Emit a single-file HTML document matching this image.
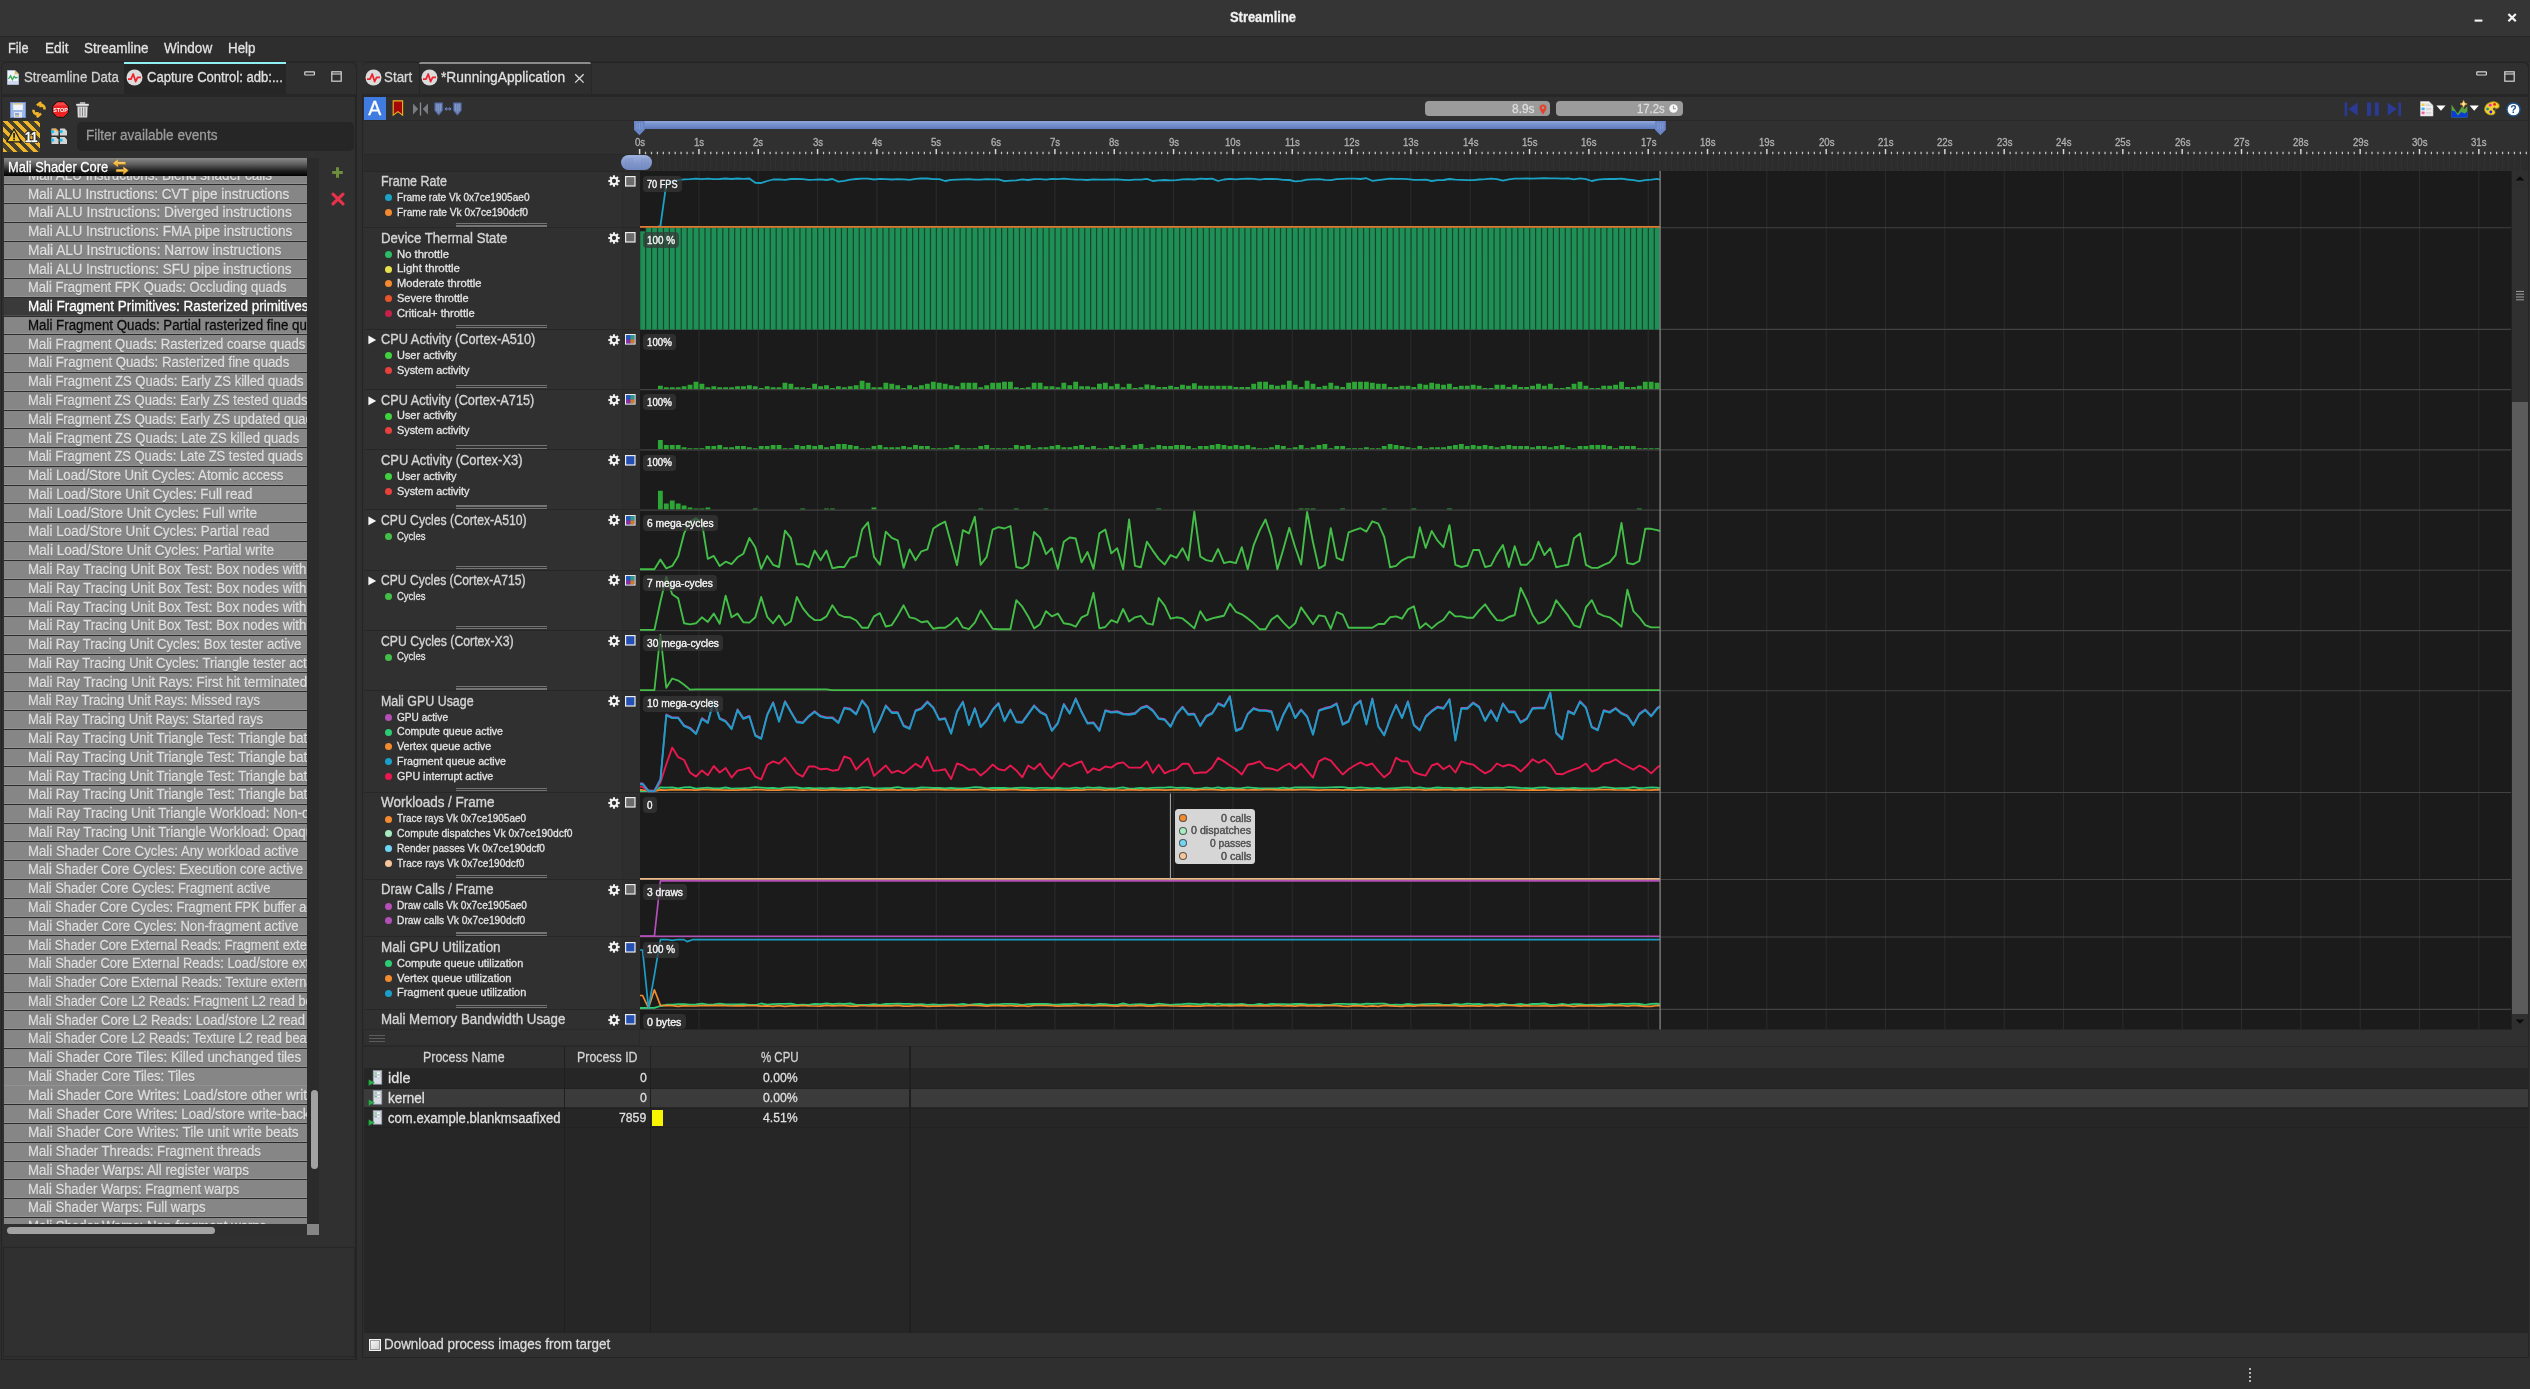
<!DOCTYPE html>
<html><head><meta charset="utf-8"><title>Streamline</title>
<style>
html,body{margin:0;padding:0;background:#2f2f2f;}
body{width:2530px;height:1389px;position:relative;overflow:hidden;font-family:"Liberation Sans",sans-serif;}
.t{position:absolute;white-space:nowrap;line-height:1em;transform-origin:0 50%;display:block;-webkit-text-stroke:0.28px;}
.b{position:absolute;}
svg{position:absolute;overflow:visible;}
#root{position:absolute;left:0;top:0;width:2530px;height:1389px;will-change:transform;}
</style></head>
<body>
<div id="root">
<div class="b" style="left:0.00px;top:0.00px;width:2530.00px;height:36.00px;background:#353535;"></div>
<div class="b" style="left:0.00px;top:36.00px;width:2530.00px;height:1.00px;background:#272727;"></div>
<span class="t" style="left:1230.00px;top:10.27px;font-size:14.67px;color:#f2f2f2;transform:scaleX(0.8798);font-weight:bold;">Streamline</span>
<svg style="left:2470px;top:10px" width="50" height="16" viewBox="0 0 50 16"><path d="M4.6 10.6 H12.4" stroke="#f4f4f4" stroke-width="2.1"/><path d="M38.4 4 L45.8 11.2 M45.8 4 L38.4 11.2" stroke="#f4f4f4" stroke-width="2.2"/></svg>
<div class="b" style="left:0.00px;top:37.00px;width:2530.00px;height:24.00px;background:#2e2e2e;"></div>
<div class="b" style="left:0.00px;top:61.00px;width:2530.00px;height:1.00px;background:#292929;"></div>
<span class="t" style="left:8.00px;top:40.56px;font-size:14.67px;color:#e4e4e4;transform:scaleX(0.8672);">File</span>
<span class="t" style="left:44.50px;top:40.56px;font-size:14.67px;color:#e4e4e4;transform:scaleX(0.9296);">Edit</span>
<span class="t" style="left:83.70px;top:40.56px;font-size:14.67px;color:#e4e4e4;transform:scaleX(0.9198);">Streamline</span>
<span class="t" style="left:163.80px;top:40.56px;font-size:14.67px;color:#e4e4e4;transform:scaleX(0.9238);">Window</span>
<span class="t" style="left:228.00px;top:40.56px;font-size:14.67px;color:#e4e4e4;transform:scaleX(0.9114);">Help</span>
<div class="b" style="left:2248.50px;top:1368.00px;width:2.10px;height:2.10px;background:#e2e2e2;border-radius:1px;"></div>
<div class="b" style="left:2248.50px;top:1371.90px;width:2.10px;height:2.10px;background:#e2e2e2;border-radius:1px;"></div>
<div class="b" style="left:2248.50px;top:1375.80px;width:2.10px;height:2.10px;background:#e2e2e2;border-radius:1px;"></div>
<div class="b" style="left:2248.50px;top:1379.70px;width:2.10px;height:2.10px;background:#e2e2e2;border-radius:1px;"></div>
<div class="b" style="left:0.60px;top:62.00px;width:356.00px;height:1297.80px;background:#252525;border-radius:5px 5px 0 0;"></div>
<div class="b" style="left:1.70px;top:63.00px;width:353.80px;height:1295.60px;background:#2e2e2e;border-radius:4px 4px 0 0;"></div>
<div class="b" style="left:1.70px;top:93.50px;width:353.80px;height:3.30px;background:#272727;"></div>
<div class="b" style="left:1.50px;top:62.50px;width:354.50px;height:31.00px;background:#2f2f2f;border-radius:5px 5px 0 0;"></div>
<div class="b" style="left:123.70px;top:62.50px;width:162.30px;height:31.00px;background:#262626;"></div>
<div class="b" style="left:123.70px;top:62.00px;width:162.30px;height:2.30px;background:#8ef0f2;"></div>
<div class="b" style="left:3.00px;top:96.80px;width:351.30px;height:1138.50px;background:#303030;"></div>
<div class="b" style="left:3.00px;top:1235.30px;width:351.30px;height:11.20px;background:#303030;"></div>
<div class="b" style="left:4.20px;top:1248.40px;width:349.40px;height:107.80px;background:#303030;box-shadow:0 0 0 1px #272727;"></div>
<svg style="left:7px;top:70px" width="12" height="15" viewBox="0 0 12 15"><path d="M0.5 0.5 H8 L11.5 4 V14.5 H0.5 Z" fill="#eef2fb" stroke="#b8c4dc" stroke-width="0.8"/><path d="M8 0.5 V4 H11.5" fill="#e6c46a" stroke="#c9a84e" stroke-width="0.5"/><path d="M1 11 H11 V14 H1 Z" fill="#cfdaf2"/><path d="M1.5 9 L3.6 5.8 L5.4 9.6 L7.2 6.4 L8.6 8 L10.6 7.2" fill="none" stroke="#35a84a" stroke-width="1.3"/></svg>
<span class="t" style="left:23.50px;top:69.67px;font-size:14.67px;color:#d2d2d2;transform:scaleX(0.9032);">Streamline Data</span>
<svg style="left:126px;top:69px" width="17" height="17" viewBox="0 0 17 17"><circle cx="8.5" cy="8.5" r="8" fill="#dcdcdc"/><path d="M2 10.2 H5 L7.2 5 L9.6 12.6 L11.6 8.4 H15" fill="none" stroke="#f0222c" stroke-width="1.7" stroke-linejoin="round"/></svg>
<span class="t" style="left:146.50px;top:69.67px;font-size:14.67px;color:#e0e0e0;transform:scaleX(0.8919);">Capture Control: adb:...</span>
<svg style="left:303.5px;top:70.5px" width="12" height="6" viewBox="0 0 12 6"><rect x="0.8" y="0.8" width="9.6" height="3.2" fill="none" stroke="#d6d6d6" stroke-width="1.2" rx="0.5"/></svg>
<svg style="left:330.5px;top:70.5px" width="12" height="12" viewBox="0 0 12 12"><rect x="0.8" y="0.8" width="9.4" height="9.4" fill="none" stroke="#d6d6d6" stroke-width="1.2"/><path d="M0.8 3 H10.2" stroke="#d6d6d6" stroke-width="1.1"/></svg>
<svg style="left:9.5px;top:101.5px" width="16" height="16" viewBox="0 0 16 16"><rect x="0.5" y="0.5" width="15" height="15" fill="#9db6e4" stroke="#6d8cd0" stroke-width="1"/><rect x="3.2" y="1" width="9.6" height="7" fill="#f2f4fa"/><rect x="3.2" y="1" width="9.6" height="1.6" fill="#d8c590"/><rect x="4" y="10" width="8" height="5.5" fill="#dfe6f5"/><rect x="5" y="11.4" width="4" height="1.2" fill="#5a7cc2"/><rect x="5" y="13.4" width="4" height="1.2" fill="#c8b070"/></svg>
<svg style="left:31px;top:101px" width="16" height="17" viewBox="0 0 16 17"><g fill="none" stroke="#f0b428" stroke-width="2.6" stroke-linejoin="round"><path d="M6 4.6 L9.4 1.8 L9.6 6.2 M9 3.6 Q13.6 4 13.6 8.4"/><path d="M10 12.6 L6.6 15.4 L6.4 11 M7 13.6 Q2.4 13.2 2.4 8.8"/></g></svg>
<svg style="left:52px;top:100.5px" width="17" height="17" viewBox="0 0 17 17"><path d="M5.2 0.7 H11.8 L16.3 5.2 V11.8 L11.8 16.3 H5.2 L0.7 11.8 V5.2 Z" fill="#ee2222" stroke="#101010" stroke-width="1"/><path d="M5.2 1.4 H11.8 L15 4.6 H2 Z" fill="#f66" opacity=".55"/><text x="8.5" y="10.6" font-family="Liberation Sans" font-weight="bold" font-size="5.4" fill="#fff" text-anchor="middle">STOP</text></svg>
<svg style="left:75.5px;top:101.5px" width="13" height="16" viewBox="0 0 13 16"><rect x="3.8" y="0.2" width="5.4" height="1.6" fill="#c8c8c8"/><rect x="0.2" y="1.8" width="12.6" height="2" fill="#e6e6e6"/><path d="M1.4 4.6 H11.6 L11.2 15.4 H1.8 Z" fill="#dcdcdc"/><path d="M4 5.4 V14.4 M6.5 5.4 V14.4 M9 5.4 V14.4" stroke="#777" stroke-width="0.9"/></svg>
<div class="b" style="left:2.8px;top:121.2px;width:37.2px;height:31.2px;overflow:hidden;background:repeating-linear-gradient(45deg,#efb52a 0,#efb52a 3.4px,#45412f 3.4px,#45412f 7.2px);"></div>
<svg style="left:6px;top:128.3px" width="16" height="15" viewBox="0 0 16 15"><path d="M8 1 L15.2 13.8 L0.8 13.8 Z" fill="#f4c430" stroke="#1a1a1a" stroke-width="1.3" stroke-linejoin="round"/><rect x="7.2" y="5" width="1.7" height="4.8" fill="#1a1a1a"/><rect x="7.2" y="10.6" width="1.7" height="1.7" fill="#1a1a1a"/></svg>
<span class="t" style="left:24.60px;top:128.80px;font-size:15.00px;color:#fff;transform:scaleX(0.7819);font-weight:bold;text-shadow:-1px -1px 0 #111,1px -1px 0 #111,-1px 1px 0 #111,1px 1px 0 #111,0 1px 0 #111,1px 0 0 #111;">11</span>
<svg style="left:51px;top:128px" width="16" height="16" viewBox="0 0 16 16"><path d="M0.5 0.5 h4.6 l2.4 2.4 v4.6 h-7 z" fill="#d4d4d4"/><circle cx="1.6" cy="3.6" r="1.7" fill="#18c0f0"/><path d="M9 0.5 h4.6 l2.4 2.4 v4.6 h-7 z" fill="#d4d4d4"/><circle cx="10.1" cy="3.6" r="1.7" fill="#18c0f0"/><path d="M0.5 9 h4.6 l2.4 2.4 v4.6 h-7 z" fill="#d4d4d4"/><circle cx="1.6" cy="12.1" r="1.7" fill="#18c0f0"/><path d="M9 9 h4.6 l2.4 2.4 v4.6 h-7 z" fill="#d4d4d4"/><circle cx="10.1" cy="12.1" r="1.7" fill="#18c0f0"/><path d="M1.5 2.4 Q4 -0.6 7 3.2" stroke="#f0a030" stroke-width="1.4" fill="none"/></svg>
<div class="b" style="left:77.00px;top:122.00px;width:277.00px;height:28.60px;background:#262626;border-radius:5px;"></div>
<span class="t" style="left:86.00px;top:127.97px;font-size:14.67px;color:#9c9c9c;transform:scaleX(0.9275);">Filter available events</span>
<div class="b" style="left:4.00px;top:158.30px;width:315.30px;height:1077.00px;background:#2b2b2b;"></div>
<div class="b" style="left:4px;top:176px;width:303.3px;height:1048px;overflow:hidden;">
<div class="b" style="left:0;top:-9.53px;width:303.3px;height:17.8px;background:#868686;box-shadow:inset 0 -1px 0 rgba(255,255,255,.10);"></div>
<span class="t" style="left:23.70px;top:-8.27px;font-size:14.67px;color:#dedede;transform:scaleX(0.9190);-webkit-text-stroke:0.3px #dedede;text-shadow:0 1px 0 rgba(70,70,70,.5);">Mali ALU Instructions: Blend shader calls</span>
<div class="b" style="left:0;top:9.24px;width:303.3px;height:17.8px;background:#868686;box-shadow:inset 0 -1px 0 rgba(255,255,255,.10);"></div>
<span class="t" style="left:23.70px;top:10.51px;font-size:14.67px;color:#dedede;transform:scaleX(0.9172);-webkit-text-stroke:0.3px #dedede;text-shadow:0 1px 0 rgba(70,70,70,.5);">Mali ALU Instructions: CVT pipe instructions</span>
<div class="b" style="left:0;top:28.02px;width:303.3px;height:17.8px;background:#868686;box-shadow:inset 0 -1px 0 rgba(255,255,255,.10);"></div>
<span class="t" style="left:23.70px;top:29.28px;font-size:14.67px;color:#dedede;transform:scaleX(0.9331);-webkit-text-stroke:0.3px #dedede;text-shadow:0 1px 0 rgba(70,70,70,.5);">Mali ALU Instructions: Diverged instructions</span>
<div class="b" style="left:0;top:46.80px;width:303.3px;height:17.8px;background:#868686;box-shadow:inset 0 -1px 0 rgba(255,255,255,.10);"></div>
<span class="t" style="left:23.70px;top:48.06px;font-size:14.67px;color:#dedede;transform:scaleX(0.9242);-webkit-text-stroke:0.3px #dedede;text-shadow:0 1px 0 rgba(70,70,70,.5);">Mali ALU Instructions: FMA pipe instructions</span>
<div class="b" style="left:0;top:65.57px;width:303.3px;height:17.8px;background:#868686;box-shadow:inset 0 -1px 0 rgba(255,255,255,.10);"></div>
<span class="t" style="left:23.70px;top:66.84px;font-size:14.67px;color:#dedede;transform:scaleX(0.9345);-webkit-text-stroke:0.3px #dedede;text-shadow:0 1px 0 rgba(70,70,70,.5);">Mali ALU Instructions: Narrow instructions</span>
<div class="b" style="left:0;top:84.35px;width:303.3px;height:17.8px;background:#868686;box-shadow:inset 0 -1px 0 rgba(255,255,255,.10);"></div>
<span class="t" style="left:23.70px;top:85.61px;font-size:14.67px;color:#dedede;transform:scaleX(0.9241);-webkit-text-stroke:0.3px #dedede;text-shadow:0 1px 0 rgba(70,70,70,.5);">Mali ALU Instructions: SFU pipe instructions</span>
<div class="b" style="left:0;top:103.12px;width:303.3px;height:17.8px;background:#868686;box-shadow:inset 0 -1px 0 rgba(255,255,255,.10);"></div>
<span class="t" style="left:23.70px;top:104.39px;font-size:14.67px;color:#dedede;transform:scaleX(0.8887);-webkit-text-stroke:0.3px #dedede;text-shadow:0 1px 0 rgba(70,70,70,.5);">Mali Fragment FPK Quads: Occluding quads</span>
<div class="b" style="left:0;top:121.90px;width:303.3px;height:17.8px;background:#3a3a3a;box-shadow:inset 0 -1px 0 rgba(255,255,255,.10);"></div>
<span class="t" style="left:23.70px;top:123.16px;font-size:14.67px;color:#ffffff;transform:scaleX(0.9185);-webkit-text-stroke:0.3px #fff;">Mali Fragment Primitives: Rasterized primitives</span>
<div class="b" style="left:0;top:140.68px;width:303.3px;height:17.8px;background:#868686;box-shadow:inset 0 -1px 0 rgba(255,255,255,.10);"></div>
<span class="t" style="left:23.70px;top:141.94px;font-size:14.67px;color:#0a0a0a;transform:scaleX(0.9079);-webkit-text-stroke:0.3px #0a0a0a;">Mali Fragment Quads: Partial rasterized fine quads</span>
<div class="b" style="left:0;top:159.45px;width:303.3px;height:17.8px;background:#868686;box-shadow:inset 0 -1px 0 rgba(255,255,255,.10);"></div>
<span class="t" style="left:23.70px;top:160.72px;font-size:14.67px;color:#dedede;transform:scaleX(0.8912);-webkit-text-stroke:0.3px #dedede;text-shadow:0 1px 0 rgba(70,70,70,.5);">Mali Fragment Quads: Rasterized coarse quads</span>
<div class="b" style="left:0;top:178.23px;width:303.3px;height:17.8px;background:#868686;box-shadow:inset 0 -1px 0 rgba(255,255,255,.10);"></div>
<span class="t" style="left:23.70px;top:179.49px;font-size:14.67px;color:#dedede;transform:scaleX(0.8983);-webkit-text-stroke:0.3px #dedede;text-shadow:0 1px 0 rgba(70,70,70,.5);">Mali Fragment Quads: Rasterized fine quads</span>
<div class="b" style="left:0;top:197.00px;width:303.3px;height:17.8px;background:#868686;box-shadow:inset 0 -1px 0 rgba(255,255,255,.10);"></div>
<span class="t" style="left:23.70px;top:198.27px;font-size:14.67px;color:#dedede;transform:scaleX(0.8902);-webkit-text-stroke:0.3px #dedede;text-shadow:0 1px 0 rgba(70,70,70,.5);">Mali Fragment ZS Quads: Early ZS killed quads</span>
<div class="b" style="left:0;top:215.78px;width:303.3px;height:17.8px;background:#868686;box-shadow:inset 0 -1px 0 rgba(255,255,255,.10);"></div>
<span class="t" style="left:23.70px;top:217.04px;font-size:14.67px;color:#dedede;transform:scaleX(0.8844);-webkit-text-stroke:0.3px #dedede;text-shadow:0 1px 0 rgba(70,70,70,.5);">Mali Fragment ZS Quads: Early ZS tested quads</span>
<div class="b" style="left:0;top:234.56px;width:303.3px;height:17.8px;background:#868686;box-shadow:inset 0 -1px 0 rgba(255,255,255,.10);"></div>
<span class="t" style="left:23.70px;top:235.82px;font-size:14.67px;color:#dedede;transform:scaleX(0.8849);-webkit-text-stroke:0.3px #dedede;text-shadow:0 1px 0 rgba(70,70,70,.5);">Mali Fragment ZS Quads: Early ZS updated quads</span>
<div class="b" style="left:0;top:253.33px;width:303.3px;height:17.8px;background:#868686;box-shadow:inset 0 -1px 0 rgba(255,255,255,.10);"></div>
<span class="t" style="left:23.70px;top:254.60px;font-size:14.67px;color:#dedede;transform:scaleX(0.8903);-webkit-text-stroke:0.3px #dedede;text-shadow:0 1px 0 rgba(70,70,70,.5);">Mali Fragment ZS Quads: Late ZS killed quads</span>
<div class="b" style="left:0;top:272.11px;width:303.3px;height:17.8px;background:#868686;box-shadow:inset 0 -1px 0 rgba(255,255,255,.10);"></div>
<span class="t" style="left:23.70px;top:273.37px;font-size:14.67px;color:#dedede;transform:scaleX(0.8838);-webkit-text-stroke:0.3px #dedede;text-shadow:0 1px 0 rgba(70,70,70,.5);">Mali Fragment ZS Quads: Late ZS tested quads</span>
<div class="b" style="left:0;top:290.88px;width:303.3px;height:17.8px;background:#868686;box-shadow:inset 0 -1px 0 rgba(255,255,255,.10);"></div>
<span class="t" style="left:23.70px;top:292.15px;font-size:14.67px;color:#dedede;transform:scaleX(0.9038);-webkit-text-stroke:0.3px #dedede;text-shadow:0 1px 0 rgba(70,70,70,.5);">Mali Load/Store Unit Cycles: Atomic access</span>
<div class="b" style="left:0;top:309.66px;width:303.3px;height:17.8px;background:#868686;box-shadow:inset 0 -1px 0 rgba(255,255,255,.10);"></div>
<span class="t" style="left:23.70px;top:310.93px;font-size:14.67px;color:#dedede;transform:scaleX(0.9121);-webkit-text-stroke:0.3px #dedede;text-shadow:0 1px 0 rgba(70,70,70,.5);">Mali Load/Store Unit Cycles: Full read</span>
<div class="b" style="left:0;top:328.44px;width:303.3px;height:17.8px;background:#868686;box-shadow:inset 0 -1px 0 rgba(255,255,255,.10);"></div>
<span class="t" style="left:23.70px;top:329.70px;font-size:14.67px;color:#dedede;transform:scaleX(0.9252);-webkit-text-stroke:0.3px #dedede;text-shadow:0 1px 0 rgba(70,70,70,.5);">Mali Load/Store Unit Cycles: Full write</span>
<div class="b" style="left:0;top:347.21px;width:303.3px;height:17.8px;background:#868686;box-shadow:inset 0 -1px 0 rgba(255,255,255,.10);"></div>
<span class="t" style="left:23.70px;top:348.48px;font-size:14.67px;color:#dedede;transform:scaleX(0.9145);-webkit-text-stroke:0.3px #dedede;text-shadow:0 1px 0 rgba(70,70,70,.5);">Mali Load/Store Unit Cycles: Partial read</span>
<div class="b" style="left:0;top:365.99px;width:303.3px;height:17.8px;background:#868686;box-shadow:inset 0 -1px 0 rgba(255,255,255,.10);"></div>
<span class="t" style="left:23.70px;top:367.25px;font-size:14.67px;color:#dedede;transform:scaleX(0.9263);-webkit-text-stroke:0.3px #dedede;text-shadow:0 1px 0 rgba(70,70,70,.5);">Mali Load/Store Unit Cycles: Partial write</span>
<div class="b" style="left:0;top:384.76px;width:303.3px;height:17.8px;background:#868686;box-shadow:inset 0 -1px 0 rgba(255,255,255,.10);"></div>
<span class="t" style="left:23.70px;top:386.03px;font-size:14.67px;color:#dedede;transform:scaleX(0.9071);-webkit-text-stroke:0.3px #dedede;text-shadow:0 1px 0 rgba(70,70,70,.5);">Mali Ray Tracing Unit Box Test: Box nodes with 1 hit</span>
<div class="b" style="left:0;top:403.54px;width:303.3px;height:17.8px;background:#868686;box-shadow:inset 0 -1px 0 rgba(255,255,255,.10);"></div>
<span class="t" style="left:23.70px;top:404.81px;font-size:14.67px;color:#dedede;transform:scaleX(0.9071);-webkit-text-stroke:0.3px #dedede;text-shadow:0 1px 0 rgba(70,70,70,.5);">Mali Ray Tracing Unit Box Test: Box nodes with 2 hits</span>
<div class="b" style="left:0;top:422.32px;width:303.3px;height:17.8px;background:#868686;box-shadow:inset 0 -1px 0 rgba(255,255,255,.10);"></div>
<span class="t" style="left:23.70px;top:423.58px;font-size:14.67px;color:#dedede;transform:scaleX(0.9071);-webkit-text-stroke:0.3px #dedede;text-shadow:0 1px 0 rgba(70,70,70,.5);">Mali Ray Tracing Unit Box Test: Box nodes with 3 hits</span>
<div class="b" style="left:0;top:441.09px;width:303.3px;height:17.8px;background:#868686;box-shadow:inset 0 -1px 0 rgba(255,255,255,.10);"></div>
<span class="t" style="left:23.70px;top:442.36px;font-size:14.67px;color:#dedede;transform:scaleX(0.9071);-webkit-text-stroke:0.3px #dedede;text-shadow:0 1px 0 rgba(70,70,70,.5);">Mali Ray Tracing Unit Box Test: Box nodes with 4 hits</span>
<div class="b" style="left:0;top:459.87px;width:303.3px;height:17.8px;background:#868686;box-shadow:inset 0 -1px 0 rgba(255,255,255,.10);"></div>
<span class="t" style="left:23.70px;top:461.13px;font-size:14.67px;color:#dedede;transform:scaleX(0.8997);-webkit-text-stroke:0.3px #dedede;text-shadow:0 1px 0 rgba(70,70,70,.5);">Mali Ray Tracing Unit Cycles: Box tester active</span>
<div class="b" style="left:0;top:478.64px;width:303.3px;height:17.8px;background:#868686;box-shadow:inset 0 -1px 0 rgba(255,255,255,.10);"></div>
<span class="t" style="left:23.70px;top:479.91px;font-size:14.67px;color:#dedede;transform:scaleX(0.8935);-webkit-text-stroke:0.3px #dedede;text-shadow:0 1px 0 rgba(70,70,70,.5);">Mali Ray Tracing Unit Cycles: Triangle tester active</span>
<div class="b" style="left:0;top:497.42px;width:303.3px;height:17.8px;background:#868686;box-shadow:inset 0 -1px 0 rgba(255,255,255,.10);"></div>
<span class="t" style="left:23.70px;top:498.69px;font-size:14.67px;color:#dedede;transform:scaleX(0.9115);-webkit-text-stroke:0.3px #dedede;text-shadow:0 1px 0 rgba(70,70,70,.5);">Mali Ray Tracing Unit Rays: First hit terminated</span>
<div class="b" style="left:0;top:516.20px;width:303.3px;height:17.8px;background:#868686;box-shadow:inset 0 -1px 0 rgba(255,255,255,.10);"></div>
<span class="t" style="left:23.70px;top:517.46px;font-size:14.67px;color:#dedede;transform:scaleX(0.8814);-webkit-text-stroke:0.3px #dedede;text-shadow:0 1px 0 rgba(70,70,70,.5);">Mali Ray Tracing Unit Rays: Missed rays</span>
<div class="b" style="left:0;top:534.97px;width:303.3px;height:17.8px;background:#868686;box-shadow:inset 0 -1px 0 rgba(255,255,255,.10);"></div>
<span class="t" style="left:23.70px;top:536.24px;font-size:14.67px;color:#dedede;transform:scaleX(0.8904);-webkit-text-stroke:0.3px #dedede;text-shadow:0 1px 0 rgba(70,70,70,.5);">Mali Ray Tracing Unit Rays: Started rays</span>
<div class="b" style="left:0;top:553.75px;width:303.3px;height:17.8px;background:#868686;box-shadow:inset 0 -1px 0 rgba(255,255,255,.10);"></div>
<span class="t" style="left:23.70px;top:555.01px;font-size:14.67px;color:#dedede;transform:scaleX(0.8980);-webkit-text-stroke:0.3px #dedede;text-shadow:0 1px 0 rgba(70,70,70,.5);">Mali Ray Tracing Unit Triangle Test: Triangle batches</span>
<div class="b" style="left:0;top:572.52px;width:303.3px;height:17.8px;background:#868686;box-shadow:inset 0 -1px 0 rgba(255,255,255,.10);"></div>
<span class="t" style="left:23.70px;top:573.79px;font-size:14.67px;color:#dedede;transform:scaleX(0.8980);-webkit-text-stroke:0.3px #dedede;text-shadow:0 1px 0 rgba(70,70,70,.5);">Mali Ray Tracing Unit Triangle Test: Triangle batches</span>
<div class="b" style="left:0;top:591.30px;width:303.3px;height:17.8px;background:#868686;box-shadow:inset 0 -1px 0 rgba(255,255,255,.10);"></div>
<span class="t" style="left:23.70px;top:592.56px;font-size:14.67px;color:#dedede;transform:scaleX(0.8980);-webkit-text-stroke:0.3px #dedede;text-shadow:0 1px 0 rgba(70,70,70,.5);">Mali Ray Tracing Unit Triangle Test: Triangle batches</span>
<div class="b" style="left:0;top:610.08px;width:303.3px;height:17.8px;background:#868686;box-shadow:inset 0 -1px 0 rgba(255,255,255,.10);"></div>
<span class="t" style="left:23.70px;top:611.34px;font-size:14.67px;color:#dedede;transform:scaleX(0.8980);-webkit-text-stroke:0.3px #dedede;text-shadow:0 1px 0 rgba(70,70,70,.5);">Mali Ray Tracing Unit Triangle Test: Triangle batches</span>
<div class="b" style="left:0;top:628.85px;width:303.3px;height:17.8px;background:#868686;box-shadow:inset 0 -1px 0 rgba(255,255,255,.10);"></div>
<span class="t" style="left:23.70px;top:630.12px;font-size:14.67px;color:#dedede;transform:scaleX(0.9101);-webkit-text-stroke:0.3px #dedede;text-shadow:0 1px 0 rgba(70,70,70,.5);">Mali Ray Tracing Unit Triangle Workload: Non-opaque</span>
<div class="b" style="left:0;top:647.63px;width:303.3px;height:17.8px;background:#868686;box-shadow:inset 0 -1px 0 rgba(255,255,255,.10);"></div>
<span class="t" style="left:23.70px;top:648.89px;font-size:14.67px;color:#dedede;transform:scaleX(0.9097);-webkit-text-stroke:0.3px #dedede;text-shadow:0 1px 0 rgba(70,70,70,.5);">Mali Ray Tracing Unit Triangle Workload: Opaque</span>
<div class="b" style="left:0;top:666.40px;width:303.3px;height:17.8px;background:#868686;box-shadow:inset 0 -1px 0 rgba(255,255,255,.10);"></div>
<span class="t" style="left:23.70px;top:667.67px;font-size:14.67px;color:#dedede;transform:scaleX(0.9025);-webkit-text-stroke:0.3px #dedede;text-shadow:0 1px 0 rgba(70,70,70,.5);">Mali Shader Core Cycles: Any workload active</span>
<div class="b" style="left:0;top:685.18px;width:303.3px;height:17.8px;background:#868686;box-shadow:inset 0 -1px 0 rgba(255,255,255,.10);"></div>
<span class="t" style="left:23.70px;top:686.44px;font-size:14.67px;color:#dedede;transform:scaleX(0.8885);-webkit-text-stroke:0.3px #dedede;text-shadow:0 1px 0 rgba(70,70,70,.5);">Mali Shader Core Cycles: Execution core active</span>
<div class="b" style="left:0;top:703.96px;width:303.3px;height:17.8px;background:#868686;box-shadow:inset 0 -1px 0 rgba(255,255,255,.10);"></div>
<span class="t" style="left:23.70px;top:705.22px;font-size:14.67px;color:#dedede;transform:scaleX(0.8807);-webkit-text-stroke:0.3px #dedede;text-shadow:0 1px 0 rgba(70,70,70,.5);">Mali Shader Core Cycles: Fragment active</span>
<div class="b" style="left:0;top:722.73px;width:303.3px;height:17.8px;background:#868686;box-shadow:inset 0 -1px 0 rgba(255,255,255,.10);"></div>
<span class="t" style="left:23.70px;top:724.00px;font-size:14.67px;color:#dedede;transform:scaleX(0.8724);-webkit-text-stroke:0.3px #dedede;text-shadow:0 1px 0 rgba(70,70,70,.5);">Mali Shader Core Cycles: Fragment FPK buffer active</span>
<div class="b" style="left:0;top:741.51px;width:303.3px;height:17.8px;background:#868686;box-shadow:inset 0 -1px 0 rgba(255,255,255,.10);"></div>
<span class="t" style="left:23.70px;top:742.77px;font-size:14.67px;color:#dedede;transform:scaleX(0.8952);-webkit-text-stroke:0.3px #dedede;text-shadow:0 1px 0 rgba(70,70,70,.5);">Mali Shader Core Cycles: Non-fragment active</span>
<div class="b" style="left:0;top:760.28px;width:303.3px;height:17.8px;background:#868686;box-shadow:inset 0 -1px 0 rgba(255,255,255,.10);"></div>
<span class="t" style="left:23.70px;top:761.55px;font-size:14.67px;color:#dedede;transform:scaleX(0.8684);-webkit-text-stroke:0.3px #dedede;text-shadow:0 1px 0 rgba(70,70,70,.5);">Mali Shader Core External Reads: Fragment external</span>
<div class="b" style="left:0;top:779.06px;width:303.3px;height:17.8px;background:#868686;box-shadow:inset 0 -1px 0 rgba(255,255,255,.10);"></div>
<span class="t" style="left:23.70px;top:780.32px;font-size:14.67px;color:#dedede;transform:scaleX(0.8806);-webkit-text-stroke:0.3px #dedede;text-shadow:0 1px 0 rgba(70,70,70,.5);">Mali Shader Core External Reads: Load/store external</span>
<div class="b" style="left:0;top:797.84px;width:303.3px;height:17.8px;background:#868686;box-shadow:inset 0 -1px 0 rgba(255,255,255,.10);"></div>
<span class="t" style="left:23.70px;top:799.10px;font-size:14.67px;color:#dedede;transform:scaleX(0.8721);-webkit-text-stroke:0.3px #dedede;text-shadow:0 1px 0 rgba(70,70,70,.5);">Mali Shader Core External Reads: Texture external</span>
<div class="b" style="left:0;top:816.61px;width:303.3px;height:17.8px;background:#868686;box-shadow:inset 0 -1px 0 rgba(255,255,255,.10);"></div>
<span class="t" style="left:23.70px;top:817.88px;font-size:14.67px;color:#dedede;transform:scaleX(0.8738);-webkit-text-stroke:0.3px #dedede;text-shadow:0 1px 0 rgba(70,70,70,.5);">Mali Shader Core L2 Reads: Fragment L2 read beats</span>
<div class="b" style="left:0;top:835.39px;width:303.3px;height:17.8px;background:#868686;box-shadow:inset 0 -1px 0 rgba(255,255,255,.10);"></div>
<span class="t" style="left:23.70px;top:836.65px;font-size:14.67px;color:#dedede;transform:scaleX(0.8878);-webkit-text-stroke:0.3px #dedede;text-shadow:0 1px 0 rgba(70,70,70,.5);">Mali Shader Core L2 Reads: Load/store L2 read beats</span>
<div class="b" style="left:0;top:854.16px;width:303.3px;height:17.8px;background:#868686;box-shadow:inset 0 -1px 0 rgba(255,255,255,.10);"></div>
<span class="t" style="left:23.70px;top:855.43px;font-size:14.67px;color:#dedede;transform:scaleX(0.8735);-webkit-text-stroke:0.3px #dedede;text-shadow:0 1px 0 rgba(70,70,70,.5);">Mali Shader Core L2 Reads: Texture L2 read beats</span>
<div class="b" style="left:0;top:872.94px;width:303.3px;height:17.8px;background:#868686;box-shadow:inset 0 -1px 0 rgba(255,255,255,.10);"></div>
<span class="t" style="left:23.70px;top:874.21px;font-size:14.67px;color:#dedede;transform:scaleX(0.9139);-webkit-text-stroke:0.3px #dedede;text-shadow:0 1px 0 rgba(70,70,70,.5);">Mali Shader Core Tiles: Killed unchanged tiles</span>
<div class="b" style="left:0;top:891.72px;width:303.3px;height:17.8px;background:#868686;box-shadow:inset 0 -1px 0 rgba(255,255,255,.10);"></div>
<span class="t" style="left:23.70px;top:892.98px;font-size:14.67px;color:#dedede;transform:scaleX(0.8944);-webkit-text-stroke:0.3px #dedede;text-shadow:0 1px 0 rgba(70,70,70,.5);">Mali Shader Core Tiles: Tiles</span>
<div class="b" style="left:0;top:910.49px;width:303.3px;height:17.8px;background:#868686;box-shadow:inset 0 -1px 0 rgba(255,255,255,.10);"></div>
<span class="t" style="left:23.70px;top:911.76px;font-size:14.67px;color:#dedede;transform:scaleX(0.9266);-webkit-text-stroke:0.3px #dedede;text-shadow:0 1px 0 rgba(70,70,70,.5);">Mali Shader Core Writes: Load/store other write beats</span>
<div class="b" style="left:0;top:929.27px;width:303.3px;height:17.8px;background:#868686;box-shadow:inset 0 -1px 0 rgba(255,255,255,.10);"></div>
<span class="t" style="left:23.70px;top:930.53px;font-size:14.67px;color:#dedede;transform:scaleX(0.9152);-webkit-text-stroke:0.3px #dedede;text-shadow:0 1px 0 rgba(70,70,70,.5);">Mali Shader Core Writes: Load/store write-back</span>
<div class="b" style="left:0;top:948.04px;width:303.3px;height:17.8px;background:#868686;box-shadow:inset 0 -1px 0 rgba(255,255,255,.10);"></div>
<span class="t" style="left:23.70px;top:949.31px;font-size:14.67px;color:#dedede;transform:scaleX(0.9234);-webkit-text-stroke:0.3px #dedede;text-shadow:0 1px 0 rgba(70,70,70,.5);">Mali Shader Core Writes: Tile unit write beats</span>
<div class="b" style="left:0;top:966.82px;width:303.3px;height:17.8px;background:#868686;box-shadow:inset 0 -1px 0 rgba(255,255,255,.10);"></div>
<span class="t" style="left:23.70px;top:968.08px;font-size:14.67px;color:#dedede;transform:scaleX(0.8971);-webkit-text-stroke:0.3px #dedede;text-shadow:0 1px 0 rgba(70,70,70,.5);">Mali Shader Threads: Fragment threads</span>
<div class="b" style="left:0;top:985.60px;width:303.3px;height:17.8px;background:#868686;box-shadow:inset 0 -1px 0 rgba(255,255,255,.10);"></div>
<span class="t" style="left:23.70px;top:986.86px;font-size:14.67px;color:#dedede;transform:scaleX(0.9056);-webkit-text-stroke:0.3px #dedede;text-shadow:0 1px 0 rgba(70,70,70,.5);">Mali Shader Warps: All register warps</span>
<div class="b" style="left:0;top:1004.37px;width:303.3px;height:17.8px;background:#868686;box-shadow:inset 0 -1px 0 rgba(255,255,255,.10);"></div>
<span class="t" style="left:23.70px;top:1005.64px;font-size:14.67px;color:#dedede;transform:scaleX(0.8874);-webkit-text-stroke:0.3px #dedede;text-shadow:0 1px 0 rgba(70,70,70,.5);">Mali Shader Warps: Fragment warps</span>
<div class="b" style="left:0;top:1023.15px;width:303.3px;height:17.8px;background:#868686;box-shadow:inset 0 -1px 0 rgba(255,255,255,.10);"></div>
<span class="t" style="left:23.70px;top:1024.41px;font-size:14.67px;color:#dedede;transform:scaleX(0.8926);-webkit-text-stroke:0.3px #dedede;text-shadow:0 1px 0 rgba(70,70,70,.5);">Mali Shader Warps: Full warps</span>
<div class="b" style="left:0;top:1041.92px;width:303.3px;height:17.8px;background:#868686;box-shadow:inset 0 -1px 0 rgba(255,255,255,.10);"></div>
<span class="t" style="left:23.70px;top:1043.19px;font-size:14.67px;color:#dedede;transform:scaleX(0.8995);-webkit-text-stroke:0.3px #dedede;text-shadow:0 1px 0 rgba(70,70,70,.5);">Mali Shader Warps: Non-fragment warps</span>
</div>
<div class="b" style="left:4.00px;top:158.30px;width:303.30px;height:17.70px;background:linear-gradient(#8a8a8a 0%,#5e5e5e 35%,#1e1e1e 72%,#000 100%);"></div>
<span class="t" style="left:8.30px;top:160.36px;font-size:14.67px;color:#fff;transform:scaleX(0.8786);">Mali Shader Core</span>
<svg style="left:112px;top:158px" width="18" height="18" viewBox="112 158 18 18"><g fill="#f3b83a" stroke="#c98a12" stroke-width="0.5" stroke-linejoin="round"><path d="M112.9 163.2 L118 159.3 V162.1 H125.6 V164.3 H118 V167.1 Z"/><path d="M128.4 170.6 L123.3 166.7 V169.5 H116.2 V171.7 H123.3 V174.5 Z"/></g><path d="M114.6 162.9 L117.4 160.8 M118 162.7 H125 M127 170.3 L124 168.2 M116.8 170.1 H123" stroke="#fff3c8" stroke-width="0.6" fill="none"/></svg>
<div class="b" style="left:310.80px;top:1090.30px;width:7.00px;height:78.30px;background:#a2a2a2;border-radius:3.5px;"></div>
<div class="b" style="left:4.00px;top:1224.00px;width:303.30px;height:11.30px;background:#2f2f2f;"></div>
<div class="b" style="left:7.00px;top:1227.20px;width:207.80px;height:7.20px;background:#a2a2a2;border-radius:3.6px;"></div>
<div class="b" style="left:307.30px;top:1224.00px;width:12.00px;height:11.30px;background:#868686;"></div>
<svg style="left:330.5px;top:165.5px" width="13" height="13" viewBox="0 0 13 13"><path d="M6.5 1.2 V11.8 M1.2 6.5 H11.8" stroke="#6d8f3c" stroke-width="3" fill="none"/></svg>
<svg style="left:330.5px;top:191.5px" width="14" height="14" viewBox="0 0 14 14"><path d="M2 2.2 L12 11.8 M12 2.2 L2 11.8" stroke="#e8314a" stroke-width="3.2" stroke-linecap="round" fill="none"/></svg>
<div class="b" style="left:361.50px;top:62.00px;width:2167.00px;height:1295.80px;background:#252525;border-radius:5px 5px 0 0;"></div>
<div class="b" style="left:362.60px;top:63.00px;width:2164.80px;height:1293.80px;background:#2e2e2e;border-radius:4px 4px 0 0;"></div>
<div class="b" style="left:362.60px;top:93.50px;width:2164.80px;height:3.30px;background:#272727;"></div>
<div class="b" style="left:362.00px;top:62.50px;width:2166.00px;height:31.00px;background:#303030;border-radius:5px 5px 0 0;"></div>
<div class="b" style="left:362.00px;top:62.50px;width:56.50px;height:31.00px;background:#2f2f2f;border-radius:5px 0 0 0;"></div>
<div class="b" style="left:418.50px;top:62.50px;width:172.50px;height:31.00px;background:#2e2e2e;box-shadow:inset 1px 0 0 #262626;"></div>
<div class="b" style="left:418.80px;top:62.00px;width:172.00px;height:1.80px;background:#8c8c8c;border-radius:2px 2px 0 0;"></div>
<div class="b" style="left:591.00px;top:62.50px;width:1.00px;height:31.00px;background:#282828;"></div>
<svg style="left:364.5px;top:69px" width="17" height="17" viewBox="0 0 17 17"><circle cx="8.5" cy="8.5" r="8" fill="#dcdcdc"/><path d="M2 10.2 H5 L7.2 5 L9.6 12.6 L11.6 8.4 H15" fill="none" stroke="#f0222c" stroke-width="1.7" stroke-linejoin="round"/></svg>
<span class="t" style="left:384.30px;top:69.67px;font-size:14.67px;color:#d8d8d8;transform:scaleX(0.9135);">Start</span>
<svg style="left:421px;top:69px" width="17" height="17" viewBox="0 0 17 17"><circle cx="8.5" cy="8.5" r="8" fill="#dcdcdc"/><path d="M2 10.2 H5 L7.2 5 L9.6 12.6 L11.6 8.4 H15" fill="none" stroke="#f0222c" stroke-width="1.7" stroke-linejoin="round"/></svg>
<span class="t" style="left:441.30px;top:69.67px;font-size:14.67px;color:#e2e2e2;transform:scaleX(0.9408);">*RunningApplication</span>
<svg style="left:573.5px;top:72.5px" width="11" height="11" viewBox="0 0 11 11"><path d="M1.2 1.2 L9.6 9.6 M9.6 1.2 L1.2 9.6" stroke="#dcdcdc" stroke-width="1.3" fill="none"/></svg>
<svg style="left:2476.3px;top:70.5px" width="12" height="6" viewBox="0 0 12 6"><rect x="0.8" y="0.8" width="9.6" height="3.2" fill="none" stroke="#d6d6d6" stroke-width="1.2" rx="0.5"/></svg>
<svg style="left:2503.5px;top:70.5px" width="12" height="12" viewBox="0 0 12 12"><rect x="0.8" y="0.8" width="9.4" height="9.4" fill="none" stroke="#d6d6d6" stroke-width="1.2"/><path d="M0.8 3 H10.2" stroke="#d6d6d6" stroke-width="1.1"/></svg>
<div class="b" style="left:364.00px;top:96.80px;width:2163.50px;height:1260.00px;background:#303030;"></div>
<div class="b" style="left:364.00px;top:120.30px;width:2163.50px;height:1.00px;background:#292929;"></div>
<div class="b" style="left:363.80px;top:97.00px;width:21.80px;height:23.00px;background:#3f7be0;"></div>
<span class="t" style="left:368.20px;top:99.15px;font-size:19.50px;color:#fff;transform:scaleX(1.0000);">A</span>
<svg style="left:392px;top:100.4px" width="13" height="17" viewBox="0 0 13 17"><path d="M1.2 0.9 H10.6 V15.2 L5.9 11.6 L1.2 15.2 Z" fill="#a60808" stroke="#f2b41e" stroke-width="1.1" stroke-linejoin="miter"/></svg>
<svg style="left:412px;top:102px" width="17" height="14" viewBox="0 0 17 14"><path d="M1 1.5 L6.2 7 L1 12.5 Z M16 1.5 L10.8 7 L16 12.5 Z" fill="#787c84"/><path d="M8.5 0.5 V13.5" stroke="#8a8e96" stroke-width="1.3"/></svg>
<svg style="left:433.5px;top:101.6px" width="29" height="15" viewBox="0 0 31 14.2" preserveAspectRatio="none"><path d="M0.8 0.8 H9.2 V8 L5 12.6 L0.8 8 Z" fill="#6a82b6" stroke="#46598c" stroke-width="0.8"/><path d="M20.8 0.8 H29.2 V8 L25 12.6 L20.8 8 Z" fill="#6a82b6" stroke="#46598c" stroke-width="0.8"/><path d="M3 2 V8 M5 2 V9 M7 2 V8 M23 2 V8 M25 2 V9 M27 2 V8" stroke="#8fa4d0" stroke-width="0.7"/><path d="M11.2 6.6 L13.6 4.6 V8.6 Z M18.8 6.6 L16.4 4.6 V8.6 Z" fill="#6d8acb"/><rect x="14.2" y="5.9" width="1.6" height="1.4" fill="#6d8acb"/></svg>
<div class="b" style="left:1425.20px;top:100.90px;width:124.50px;height:15.60px;background:#9b9b9b;border-radius:4px;"></div>
<span class="t" style="left:1511.60px;top:102.75px;font-size:12.30px;color:#dcdcdc;transform:scaleX(0.9721);">8.9s</span>
<svg style="left:1538.5px;top:103.5px" width="8" height="11" viewBox="0 0 8 11"><path d="M4 0.4 C1.8 0.4 0.5 2 0.5 3.8 C0.5 6 4 10.4 4 10.4 C4 10.4 7.5 6 7.5 3.8 C7.5 2 6.2 0.4 4 0.4 Z" fill="#e8402c"/><circle cx="4" cy="3.7" r="1.3" fill="#9b9b9b"/></svg>
<div class="b" style="left:1555.60px;top:100.90px;width:127.20px;height:15.60px;background:#9b9b9b;border-radius:4px;"></div>
<span class="t" style="left:1637.30px;top:102.75px;font-size:12.30px;color:#dcdcdc;transform:scaleX(0.9173);">17.2s</span>
<svg style="left:1669.3px;top:104.4px" width="9" height="9" viewBox="0 0 9 9"><circle cx="4.5" cy="4.5" r="4.2" fill="#fafafa"/><path d="M4.5 1.8 V4.7 H7" stroke="#9b9b9b" stroke-width="1.1" fill="none"/></svg>
<svg style="left:2344px;top:101.5px" width="60" height="15" viewBox="0 0 60 15"><g fill="#2b3a94"><rect x="0.6" y="0.4" width="2.6" height="13.4"/><path d="M13.6 0.4 V13.8 L4.4 7.1 Z"/><rect x="23" y="0.4" width="4" height="13.4"/><rect x="30.8" y="0.4" width="4" height="13.4"/><path d="M43.6 0.4 V13.8 L52.8 7.1 Z"/><rect x="54.4" y="0.4" width="2.6" height="13.4"/></g></svg>
<svg style="left:2419.5px;top:101px" width="28" height="16" viewBox="0 0 28 16"><path d="M0.5 0.5 H9 L13 4.4 V15 H0.5 Z" fill="#f4f4f4" stroke="#cfcfcf" stroke-width="0.6"/><rect x="1.6" y="2.4" width="3" height="2.6" fill="#f0d050"/><rect x="1.6" y="6.6" width="3" height="2.6" fill="#40b0f0"/><rect x="1.6" y="10.6" width="3" height="2.6" fill="#f060a0"/><path d="M5.6 3.2 H10 M5.6 4.6 H11.4 M5.6 7.4 H11.4 M5.6 8.8 H11.4 M5.6 11.4 H11.4 M5.6 12.8 H11.4" stroke="#c4c4c4" stroke-width="0.7"/><path d="M16.4 4.6 H25.6 L21 9.8 Z" fill="#fff"/></svg>
<svg style="left:2450.5px;top:99.5px" width="30" height="18" viewBox="0 0 30 18"><path d="M0.5 17.4 V4.6 L6.6 13.4 L11 6.6 L13.4 9 L16.4 6 V17.4 Z" fill="#55a040"/><path d="M0.5 17.4 V10.6 L4 11.2 L6.8 15.6 L10.4 12 L13.6 13.4 L16.4 11.6 V17.4 Z" fill="#0a3cd8"/><path d="M12.6 0.4 L13.7 2.9 L16.2 4 L13.7 5.1 L12.6 7.6 L11.5 5.1 L9 4 L11.5 2.9 Z" fill="#fbe7a0" stroke="#e0a030" stroke-width="0.7"/><path d="M18.6 5.6 H27.8 L23.2 10.8 Z" fill="#fff"/></svg>
<svg style="left:2484px;top:100.5px" width="16" height="15" viewBox="0 0 16 15"><path d="M8.6 0.8 C13 0.4 15.6 3 15.2 5.6 C14.8 8 12 7 11 8.6 C10 10.4 12 11.4 10.4 13 C8.4 14.8 2.4 14 0.9 10 C-0.4 6 3 1.4 8.6 0.8 Z" fill="#f2d228" stroke="#b89018" stroke-width="0.8"/><circle cx="6.2" cy="4.2" r="1.4" fill="#f020d0"/><circle cx="10.6" cy="3.4" r="1.4" fill="#f02020"/><circle cx="3.6" cy="8" r="1.4" fill="#1a9090"/><circle cx="6.8" cy="11" r="1.4" fill="#1818f0"/><circle cx="10.4" cy="8" r="1.5" fill="#444"/></svg>
<svg style="left:2505.5px;top:101.5px" width="15" height="15" viewBox="0 0 15 15"><circle cx="7.5" cy="7.5" r="6.6" fill="#fdfdfd" stroke="#1e4f86" stroke-width="1.5"/><text x="7.5" y="11.3" font-family="Liberation Sans" font-weight="bold" font-size="10.5" fill="#1e4f86" text-anchor="middle">?</text></svg>
<div class="b" style="left:364.00px;top:154.80px;width:2163.50px;height:16.20px;background:#2c2c2c;"></div>
<div class="b" style="left:364.00px;top:154.30px;width:2163.50px;height:1.00px;background:#282828;"></div>
<div class="b" style="left:639.10px;top:155.3px;width:1887.40px;height:15.5px;background:repeating-linear-gradient(90deg,#313131 0,#313131 1px,transparent 1px,transparent 5.9330px);"></div>
<div class="b" style="left:634.40px;top:120.60px;width:1031.08px;height:8.80px;background:linear-gradient(#90a8dc,#7691cd 45%,#5d7bbd);"></div>
<svg style="left:634.40px;top:120.6px" width="11" height="15" viewBox="0 0 11 15"><path d="M0 0 H10.8 V8.8 L5.4 14.2 L0 8.8 Z" fill="#6a86c6"/><path d="M3 1.6 V8 M5.4 1.6 V8.6 M7.8 1.6 V8" stroke="#8aa2d8" stroke-width="0.8"/></svg>
<svg style="left:1654.68px;top:120.6px" width="11" height="15" viewBox="0 0 11 15"><path d="M0 0 H10.8 V8.8 L5.4 14.2 L0 8.8 Z" fill="#6a86c6"/><path d="M3 1.6 V8 M5.4 1.6 V8.6 M7.8 1.6 V8" stroke="#8aa2d8" stroke-width="0.8"/></svg>
<svg style="left:0;top:0" width="2530" height="172" viewBox="0 0 2530 172"><path d="M645.53 151.8V154.3M651.47 151.8V154.3M657.40 151.8V154.3M663.33 151.8V154.3M669.26 151.8V154.3M675.20 151.8V154.3M681.13 151.8V154.3M687.06 151.8V154.3M693.00 151.8V154.3M704.86 151.8V154.3M710.80 151.8V154.3M716.73 151.8V154.3M722.66 151.8V154.3M728.60 151.8V154.3M734.53 151.8V154.3M740.46 151.8V154.3M746.39 151.8V154.3M752.33 151.8V154.3M764.19 151.8V154.3M770.13 151.8V154.3M776.06 151.8V154.3M781.99 151.8V154.3M787.92 151.8V154.3M793.86 151.8V154.3M799.79 151.8V154.3M805.72 151.8V154.3M811.66 151.8V154.3M823.52 151.8V154.3M829.46 151.8V154.3M835.39 151.8V154.3M841.32 151.8V154.3M847.25 151.8V154.3M853.19 151.8V154.3M859.12 151.8V154.3M865.05 151.8V154.3M870.99 151.8V154.3M882.85 151.8V154.3M888.79 151.8V154.3M894.72 151.8V154.3M900.65 151.8V154.3M906.59 151.8V154.3M912.52 151.8V154.3M918.45 151.8V154.3M924.38 151.8V154.3M930.32 151.8V154.3M942.18 151.8V154.3M948.12 151.8V154.3M954.05 151.8V154.3M959.98 151.8V154.3M965.91 151.8V154.3M971.85 151.8V154.3M977.78 151.8V154.3M983.71 151.8V154.3M989.65 151.8V154.3M1001.51 151.8V154.3M1007.45 151.8V154.3M1013.38 151.8V154.3M1019.31 151.8V154.3M1025.24 151.8V154.3M1031.18 151.8V154.3M1037.11 151.8V154.3M1043.04 151.8V154.3M1048.98 151.8V154.3M1060.84 151.8V154.3M1066.78 151.8V154.3M1072.71 151.8V154.3M1078.64 151.8V154.3M1084.58 151.8V154.3M1090.51 151.8V154.3M1096.44 151.8V154.3M1102.37 151.8V154.3M1108.31 151.8V154.3M1120.17 151.8V154.3M1126.11 151.8V154.3M1132.04 151.8V154.3M1137.97 151.8V154.3M1143.90 151.8V154.3M1149.84 151.8V154.3M1155.77 151.8V154.3M1161.70 151.8V154.3M1167.64 151.8V154.3M1179.50 151.8V154.3M1185.44 151.8V154.3M1191.37 151.8V154.3M1197.30 151.8V154.3M1203.24 151.8V154.3M1209.17 151.8V154.3M1215.10 151.8V154.3M1221.03 151.8V154.3M1226.97 151.8V154.3M1238.83 151.8V154.3M1244.77 151.8V154.3M1250.70 151.8V154.3M1256.63 151.8V154.3M1262.57 151.8V154.3M1268.50 151.8V154.3M1274.43 151.8V154.3M1280.36 151.8V154.3M1286.30 151.8V154.3M1298.16 151.8V154.3M1304.10 151.8V154.3M1310.03 151.8V154.3M1315.96 151.8V154.3M1321.89 151.8V154.3M1327.83 151.8V154.3M1333.76 151.8V154.3M1339.69 151.8V154.3M1345.63 151.8V154.3M1357.49 151.8V154.3M1363.43 151.8V154.3M1369.36 151.8V154.3M1375.29 151.8V154.3M1381.22 151.8V154.3M1387.16 151.8V154.3M1393.09 151.8V154.3M1399.02 151.8V154.3M1404.96 151.8V154.3M1416.82 151.8V154.3M1422.76 151.8V154.3M1428.69 151.8V154.3M1434.62 151.8V154.3M1440.55 151.8V154.3M1446.49 151.8V154.3M1452.42 151.8V154.3M1458.35 151.8V154.3M1464.29 151.8V154.3M1476.15 151.8V154.3M1482.09 151.8V154.3M1488.02 151.8V154.3M1493.95 151.8V154.3M1499.88 151.8V154.3M1505.82 151.8V154.3M1511.75 151.8V154.3M1517.68 151.8V154.3M1523.62 151.8V154.3M1535.48 151.8V154.3M1541.42 151.8V154.3M1547.35 151.8V154.3M1553.28 151.8V154.3M1559.22 151.8V154.3M1565.15 151.8V154.3M1571.08 151.8V154.3M1577.01 151.8V154.3M1582.95 151.8V154.3M1594.81 151.8V154.3M1600.75 151.8V154.3M1606.68 151.8V154.3M1612.61 151.8V154.3M1618.55 151.8V154.3M1624.48 151.8V154.3M1630.41 151.8V154.3M1636.34 151.8V154.3M1642.28 151.8V154.3M1654.14 151.8V154.3M1660.08 151.8V154.3M1666.01 151.8V154.3M1671.94 151.8V154.3M1677.88 151.8V154.3M1683.81 151.8V154.3M1689.74 151.8V154.3M1695.67 151.8V154.3M1701.61 151.8V154.3M1713.47 151.8V154.3M1719.41 151.8V154.3M1725.34 151.8V154.3M1731.27 151.8V154.3M1737.20 151.8V154.3M1743.14 151.8V154.3M1749.07 151.8V154.3M1755.00 151.8V154.3M1760.94 151.8V154.3M1772.80 151.8V154.3M1778.74 151.8V154.3M1784.67 151.8V154.3M1790.60 151.8V154.3M1796.53 151.8V154.3M1802.47 151.8V154.3M1808.40 151.8V154.3M1814.33 151.8V154.3M1820.27 151.8V154.3M1832.13 151.8V154.3M1838.07 151.8V154.3M1844.00 151.8V154.3M1849.93 151.8V154.3M1855.86 151.8V154.3M1861.80 151.8V154.3M1867.73 151.8V154.3M1873.66 151.8V154.3M1879.60 151.8V154.3M1891.46 151.8V154.3M1897.40 151.8V154.3M1903.33 151.8V154.3M1909.26 151.8V154.3M1915.20 151.8V154.3M1921.13 151.8V154.3M1927.06 151.8V154.3M1932.99 151.8V154.3M1938.93 151.8V154.3M1950.79 151.8V154.3M1956.73 151.8V154.3M1962.66 151.8V154.3M1968.59 151.8V154.3M1974.53 151.8V154.3M1980.46 151.8V154.3M1986.39 151.8V154.3M1992.32 151.8V154.3M1998.26 151.8V154.3M2010.12 151.8V154.3M2016.06 151.8V154.3M2021.99 151.8V154.3M2027.92 151.8V154.3M2033.86 151.8V154.3M2039.79 151.8V154.3M2045.72 151.8V154.3M2051.65 151.8V154.3M2057.59 151.8V154.3M2069.45 151.8V154.3M2075.39 151.8V154.3M2081.32 151.8V154.3M2087.25 151.8V154.3M2093.18 151.8V154.3M2099.12 151.8V154.3M2105.05 151.8V154.3M2110.98 151.8V154.3M2116.92 151.8V154.3M2128.78 151.8V154.3M2134.72 151.8V154.3M2140.65 151.8V154.3M2146.58 151.8V154.3M2152.51 151.8V154.3M2158.45 151.8V154.3M2164.38 151.8V154.3M2170.31 151.8V154.3M2176.25 151.8V154.3M2188.11 151.8V154.3M2194.05 151.8V154.3M2199.98 151.8V154.3M2205.91 151.8V154.3M2211.84 151.8V154.3M2217.78 151.8V154.3M2223.71 151.8V154.3M2229.64 151.8V154.3M2235.58 151.8V154.3M2247.44 151.8V154.3M2253.38 151.8V154.3M2259.31 151.8V154.3M2265.24 151.8V154.3M2271.18 151.8V154.3M2277.11 151.8V154.3M2283.04 151.8V154.3M2288.97 151.8V154.3M2294.91 151.8V154.3M2306.77 151.8V154.3M2312.71 151.8V154.3M2318.64 151.8V154.3M2324.57 151.8V154.3M2330.51 151.8V154.3M2336.44 151.8V154.3M2342.37 151.8V154.3M2348.30 151.8V154.3M2354.24 151.8V154.3M2366.10 151.8V154.3M2372.04 151.8V154.3M2377.97 151.8V154.3M2383.90 151.8V154.3M2389.84 151.8V154.3M2395.77 151.8V154.3M2401.70 151.8V154.3M2407.63 151.8V154.3M2413.57 151.8V154.3M2425.43 151.8V154.3M2431.37 151.8V154.3M2437.30 151.8V154.3M2443.23 151.8V154.3M2449.16 151.8V154.3M2455.10 151.8V154.3M2461.03 151.8V154.3M2466.96 151.8V154.3M2472.90 151.8V154.3M2484.76 151.8V154.3M2490.70 151.8V154.3M2496.63 151.8V154.3M2502.56 151.8V154.3M2508.49 151.8V154.3M2514.43 151.8V154.3M2520.36 151.8V154.3M2526.29 151.8V154.3" stroke="#c4c4c4" stroke-width="1.25"/><path d="M639.60 149V154.3M698.93 149V154.3M758.26 149V154.3M817.59 149V154.3M876.92 149V154.3M936.25 149V154.3M995.58 149V154.3M1054.91 149V154.3M1114.24 149V154.3M1173.57 149V154.3M1232.90 149V154.3M1292.23 149V154.3M1351.56 149V154.3M1410.89 149V154.3M1470.22 149V154.3M1529.55 149V154.3M1588.88 149V154.3M1648.21 149V154.3M1707.54 149V154.3M1766.87 149V154.3M1826.20 149V154.3M1885.53 149V154.3M1944.86 149V154.3M2004.19 149V154.3M2063.52 149V154.3M2122.85 149V154.3M2182.18 149V154.3M2241.51 149V154.3M2300.84 149V154.3M2360.17 149V154.3M2419.50 149V154.3M2478.83 149V154.3" stroke="#dadada" stroke-width="1.45"/></svg>
<span class="t" style="left:634.79px;top:138.10px;font-size:10.40px;color:#b2b2b2;transform:scaleX(0.9300);">0s</span>
<span class="t" style="left:694.12px;top:138.10px;font-size:10.40px;color:#b2b2b2;transform:scaleX(0.9300);">1s</span>
<span class="t" style="left:753.45px;top:138.10px;font-size:10.40px;color:#b2b2b2;transform:scaleX(0.9300);">2s</span>
<span class="t" style="left:812.78px;top:138.10px;font-size:10.40px;color:#b2b2b2;transform:scaleX(0.9300);">3s</span>
<span class="t" style="left:872.11px;top:138.10px;font-size:10.40px;color:#b2b2b2;transform:scaleX(0.9300);">4s</span>
<span class="t" style="left:931.44px;top:138.10px;font-size:10.40px;color:#b2b2b2;transform:scaleX(0.9300);">5s</span>
<span class="t" style="left:990.77px;top:138.10px;font-size:10.40px;color:#b2b2b2;transform:scaleX(0.9300);">6s</span>
<span class="t" style="left:1050.10px;top:138.10px;font-size:10.40px;color:#b2b2b2;transform:scaleX(0.9300);">7s</span>
<span class="t" style="left:1109.43px;top:138.10px;font-size:10.40px;color:#b2b2b2;transform:scaleX(0.9300);">8s</span>
<span class="t" style="left:1168.76px;top:138.10px;font-size:10.40px;color:#b2b2b2;transform:scaleX(0.9300);">9s</span>
<span class="t" style="left:1225.40px;top:138.10px;font-size:10.40px;color:#b2b2b2;transform:scaleX(0.9300);">10s</span>
<span class="t" style="left:1285.09px;top:138.10px;font-size:10.40px;color:#b2b2b2;transform:scaleX(0.9300);">11s</span>
<span class="t" style="left:1344.06px;top:138.10px;font-size:10.40px;color:#b2b2b2;transform:scaleX(0.9300);">12s</span>
<span class="t" style="left:1403.39px;top:138.10px;font-size:10.40px;color:#b2b2b2;transform:scaleX(0.9300);">13s</span>
<span class="t" style="left:1462.72px;top:138.10px;font-size:10.40px;color:#b2b2b2;transform:scaleX(0.9300);">14s</span>
<span class="t" style="left:1522.05px;top:138.10px;font-size:10.40px;color:#b2b2b2;transform:scaleX(0.9300);">15s</span>
<span class="t" style="left:1581.38px;top:138.10px;font-size:10.40px;color:#b2b2b2;transform:scaleX(0.9300);">16s</span>
<span class="t" style="left:1640.71px;top:138.10px;font-size:10.40px;color:#b2b2b2;transform:scaleX(0.9300);">17s</span>
<span class="t" style="left:1700.04px;top:138.10px;font-size:10.40px;color:#b2b2b2;transform:scaleX(0.9300);">18s</span>
<span class="t" style="left:1759.37px;top:138.10px;font-size:10.40px;color:#b2b2b2;transform:scaleX(0.9300);">19s</span>
<span class="t" style="left:1818.70px;top:138.10px;font-size:10.40px;color:#b2b2b2;transform:scaleX(0.9300);">20s</span>
<span class="t" style="left:1878.03px;top:138.10px;font-size:10.40px;color:#b2b2b2;transform:scaleX(0.9300);">21s</span>
<span class="t" style="left:1937.36px;top:138.10px;font-size:10.40px;color:#b2b2b2;transform:scaleX(0.9300);">22s</span>
<span class="t" style="left:1996.69px;top:138.10px;font-size:10.40px;color:#b2b2b2;transform:scaleX(0.9300);">23s</span>
<span class="t" style="left:2056.02px;top:138.10px;font-size:10.40px;color:#b2b2b2;transform:scaleX(0.9300);">24s</span>
<span class="t" style="left:2115.35px;top:138.10px;font-size:10.40px;color:#b2b2b2;transform:scaleX(0.9300);">25s</span>
<span class="t" style="left:2174.68px;top:138.10px;font-size:10.40px;color:#b2b2b2;transform:scaleX(0.9300);">26s</span>
<span class="t" style="left:2234.01px;top:138.10px;font-size:10.40px;color:#b2b2b2;transform:scaleX(0.9300);">27s</span>
<span class="t" style="left:2293.34px;top:138.10px;font-size:10.40px;color:#b2b2b2;transform:scaleX(0.9300);">28s</span>
<span class="t" style="left:2352.67px;top:138.10px;font-size:10.40px;color:#b2b2b2;transform:scaleX(0.9300);">29s</span>
<span class="t" style="left:2412.00px;top:138.10px;font-size:10.40px;color:#b2b2b2;transform:scaleX(0.9300);">30s</span>
<span class="t" style="left:2471.33px;top:138.10px;font-size:10.40px;color:#b2b2b2;transform:scaleX(0.9300);">31s</span>
<div class="b" style="left:620.70px;top:155.30px;width:31.70px;height:15.00px;background:linear-gradient(#9fb2de,#8499cd 50%,#7088c0);border-radius:7.5px;"></div>
<svg style="left:620.7px;top:155.3px" width="32" height="15" viewBox="0 0 32 15"><path d="M5 3.5V11.5M8 3V12M11 3V12M21 3V12M24 3V12M27 3.5V11.5" stroke="#7a8fc4" stroke-width="0.8"/></svg>
<svg style="left:0;top:0" width="2530" height="1389" viewBox="0 0 2530 1389"><defs><clipPath id="cc"><rect x="639.60" y="171.00" width="1871.90" height="858.50"/></clipPath></defs><rect x="639.60" y="171.00" width="1871.90" height="858.50" fill="#1b1b1b"/><path d="M698.93 171.0V1029.5M758.26 171.0V1029.5M817.59 171.0V1029.5M876.92 171.0V1029.5M936.25 171.0V1029.5M995.58 171.0V1029.5M1054.91 171.0V1029.5M1114.24 171.0V1029.5M1173.57 171.0V1029.5M1232.90 171.0V1029.5M1292.23 171.0V1029.5M1351.56 171.0V1029.5M1410.89 171.0V1029.5M1470.22 171.0V1029.5M1529.55 171.0V1029.5M1588.88 171.0V1029.5M1648.21 171.0V1029.5M1707.54 171.0V1029.5M1766.87 171.0V1029.5M1826.20 171.0V1029.5M1885.53 171.0V1029.5M1944.86 171.0V1029.5M2004.19 171.0V1029.5M2063.52 171.0V1029.5M2122.85 171.0V1029.5M2182.18 171.0V1029.5M2241.51 171.0V1029.5M2300.84 171.0V1029.5M2360.17 171.0V1029.5M2419.50 171.0V1029.5M2478.83 171.0V1029.5" stroke="#2c2c2c" stroke-width="1"/><g clip-path="url(#cc)"><path d="M657.95 388.90h4.85v-3.10h-4.85zM663.88 388.90h4.85v-1.60h-4.85zM669.81 388.90h4.85v-1.60h-4.85zM675.75 388.90h4.85v-1.60h-4.85zM681.68 388.90h4.85v-2.70h-4.85zM687.61 388.90h4.85v-4.10h-4.85zM693.55 388.90h4.85v-7.10h-4.85zM699.48 388.90h4.85v-5.10h-4.85zM705.41 388.90h4.85v-1.60h-4.85zM711.35 388.90h4.85v-2.70h-4.85zM717.28 388.90h4.85v-1.60h-4.85zM723.21 388.90h4.85v-1.60h-4.85zM729.14 388.90h4.85v-1.60h-4.85zM735.08 388.90h4.85v-2.70h-4.85zM741.01 388.90h4.85v-2.70h-4.85zM746.94 388.90h4.85v-3.70h-4.85zM752.88 388.90h4.85v-2.70h-4.85zM758.81 388.90h4.85v-1.00h-4.85zM764.74 388.90h4.85v-2.70h-4.85zM770.68 388.90h4.85v-1.60h-4.85zM776.61 388.90h4.85v-1.60h-4.85zM782.54 388.90h4.85v-6.10h-4.85zM788.47 388.90h4.85v-5.10h-4.85zM794.41 388.90h4.85v-1.60h-4.85zM800.34 388.90h4.85v-1.60h-4.85zM806.27 388.90h4.85v-1.00h-4.85zM812.21 388.90h4.85v-5.10h-4.85zM818.14 388.90h4.85v-2.70h-4.85zM824.07 388.90h4.85v-3.70h-4.85zM830.01 388.90h4.85v-1.00h-4.85zM835.94 388.90h4.85v-2.70h-4.85zM841.87 388.90h4.85v-1.60h-4.85zM847.80 388.90h4.85v-2.70h-4.85zM853.74 388.90h4.85v-3.70h-4.85zM859.67 388.90h4.85v-8.20h-4.85zM865.60 388.90h4.85v-6.10h-4.85zM871.54 388.90h4.85v-1.60h-4.85zM877.47 388.90h4.85v-1.60h-4.85zM883.40 388.90h4.85v-6.10h-4.85zM889.34 388.90h4.85v-5.10h-4.85zM895.27 388.90h4.85v-3.70h-4.85zM901.20 388.90h4.85v-1.00h-4.85zM907.13 388.90h4.85v-3.70h-4.85zM913.07 388.90h4.85v-1.60h-4.85zM919.00 388.90h4.85v-3.70h-4.85zM924.93 388.90h4.85v-5.10h-4.85zM930.87 388.90h4.85v-7.10h-4.85zM936.80 388.90h4.85v-6.10h-4.85zM942.73 388.90h4.85v-5.10h-4.85zM948.67 388.90h4.85v-3.70h-4.85zM954.60 388.90h4.85v-2.70h-4.85zM960.53 388.90h4.85v-6.10h-4.85zM966.46 388.90h4.85v-6.10h-4.85zM972.40 388.90h4.85v-6.10h-4.85zM978.33 388.90h4.85v-1.60h-4.85zM984.26 388.90h4.85v-3.70h-4.85zM990.20 388.90h4.85v-6.10h-4.85zM996.13 388.90h4.85v-6.10h-4.85zM1002.06 388.90h4.85v-7.10h-4.85zM1008.00 388.90h4.85v-7.10h-4.85zM1013.93 388.90h4.85v-1.60h-4.85zM1019.86 388.90h4.85v-1.00h-4.85zM1025.79 388.90h4.85v-1.60h-4.85zM1031.73 388.90h4.85v-6.10h-4.85zM1037.66 388.90h4.85v-6.10h-4.85zM1043.59 388.90h4.85v-2.70h-4.85zM1049.53 388.90h4.85v-2.70h-4.85zM1055.46 388.90h4.85v-1.60h-4.85zM1061.39 388.90h4.85v-6.10h-4.85zM1067.33 388.90h4.85v-3.70h-4.85zM1073.26 388.90h4.85v-7.10h-4.85zM1079.19 388.90h4.85v-2.70h-4.85zM1085.12 388.90h4.85v-2.70h-4.85zM1091.06 388.90h4.85v-1.60h-4.85zM1096.99 388.90h4.85v-5.10h-4.85zM1102.92 388.90h4.85v-6.10h-4.85zM1108.86 388.90h4.85v-2.70h-4.85zM1114.79 388.90h4.85v-5.10h-4.85zM1120.72 388.90h4.85v-1.60h-4.85zM1126.66 388.90h4.85v-5.10h-4.85zM1132.59 388.90h4.85v-1.00h-4.85zM1138.52 388.90h4.85v-1.60h-4.85zM1144.45 388.90h4.85v-4.50h-4.85zM1150.39 388.90h4.85v-3.70h-4.85zM1156.32 388.90h4.85v-2.00h-4.85zM1162.25 388.90h4.85v-2.00h-4.85zM1168.19 388.90h4.85v-3.10h-4.85zM1174.12 388.90h4.85v-2.00h-4.85zM1180.05 388.90h4.85v-4.10h-4.85zM1185.99 388.90h4.85v-3.10h-4.85zM1191.92 388.90h4.85v-5.70h-4.85zM1197.85 388.90h4.85v-3.10h-4.85zM1203.79 388.90h4.85v-3.10h-4.85zM1209.72 388.90h4.85v-3.10h-4.85zM1215.65 388.90h4.85v-3.10h-4.85zM1221.58 388.90h4.85v-3.10h-4.85zM1227.52 388.90h4.85v-3.10h-4.85zM1233.45 388.90h4.85v-2.00h-4.85zM1239.38 388.90h4.85v-2.00h-4.85zM1245.32 388.90h4.85v-2.00h-4.85zM1251.25 388.90h4.85v-5.10h-4.85zM1257.18 388.90h4.85v-7.10h-4.85zM1263.12 388.90h4.85v-7.10h-4.85zM1269.05 388.90h4.85v-4.10h-4.85zM1274.98 388.90h4.85v-3.10h-4.85zM1280.91 388.90h4.85v-4.10h-4.85zM1286.85 388.90h4.85v-8.20h-4.85zM1292.78 388.90h4.85v-4.10h-4.85zM1298.71 388.90h4.85v-2.00h-4.85zM1304.65 388.90h4.85v-8.20h-4.85zM1310.58 388.90h4.85v-5.10h-4.85zM1316.51 388.90h4.85v-2.00h-4.85zM1322.44 388.90h4.85v-3.10h-4.85zM1328.38 388.90h4.85v-6.10h-4.85zM1334.31 388.90h4.85v-3.10h-4.85zM1340.24 388.90h4.85v-2.00h-4.85zM1346.18 388.90h4.85v-6.10h-4.85zM1352.11 388.90h4.85v-7.10h-4.85zM1358.04 388.90h4.85v-7.10h-4.85zM1363.98 388.90h4.85v-7.10h-4.85zM1369.91 388.90h4.85v-6.10h-4.85zM1375.84 388.90h4.85v-5.10h-4.85zM1381.77 388.90h4.85v-5.10h-4.85zM1387.71 388.90h4.85v-2.00h-4.85zM1393.64 388.90h4.85v-2.00h-4.85zM1399.57 388.90h4.85v-3.10h-4.85zM1405.51 388.90h4.85v-3.10h-4.85zM1411.44 388.90h4.85v-2.00h-4.85zM1417.37 388.90h4.85v-5.10h-4.85zM1423.31 388.90h4.85v-4.10h-4.85zM1429.24 388.90h4.85v-6.10h-4.85zM1435.17 388.90h4.85v-5.10h-4.85zM1441.10 388.90h4.85v-4.10h-4.85zM1447.04 388.90h4.85v-5.10h-4.85zM1452.97 388.90h4.85v-2.00h-4.85zM1458.90 388.90h4.85v-3.10h-4.85zM1464.84 388.90h4.85v-3.10h-4.85zM1470.77 388.90h4.85v-4.10h-4.85zM1476.70 388.90h4.85v-3.10h-4.85zM1482.64 388.90h4.85v-1.00h-4.85zM1488.57 388.90h4.85v-1.00h-4.85zM1494.50 388.90h4.85v-4.10h-4.85zM1500.43 388.90h4.85v-4.10h-4.85zM1506.37 388.90h4.85v-2.00h-4.85zM1512.30 388.90h4.85v-4.10h-4.85zM1518.23 388.90h4.85v-2.00h-4.85zM1524.17 388.90h4.85v-2.00h-4.85zM1530.10 388.90h4.85v-3.10h-4.85zM1536.03 388.90h4.85v-5.10h-4.85zM1541.97 388.90h4.85v-3.10h-4.85zM1547.90 388.90h4.85v-5.10h-4.85zM1553.83 388.90h4.85v-1.00h-4.85zM1559.77 388.90h4.85v-1.00h-4.85zM1565.70 388.90h4.85v-2.00h-4.85zM1571.63 388.90h4.85v-5.10h-4.85zM1577.56 388.90h4.85v-7.10h-4.85zM1583.50 388.90h4.85v-3.10h-4.85zM1589.43 388.90h4.85v-1.00h-4.85zM1595.36 388.90h4.85v-1.00h-4.85zM1601.30 388.90h4.85v-3.10h-4.85zM1607.23 388.90h4.85v-3.10h-4.85zM1613.16 388.90h4.85v-4.10h-4.85zM1619.10 388.90h4.85v-7.10h-4.85zM1625.03 388.90h4.85v-2.00h-4.85zM1630.96 388.90h4.85v-2.00h-4.85zM1636.89 388.90h4.85v-3.10h-4.85zM1642.83 388.90h4.85v-7.10h-4.85zM1648.76 388.90h4.85v-7.10h-4.85zM1654.69 388.90h4.85v-6.10h-4.85z" fill="#2ea636"/><path d="M657.95 449.20h4.85v-9.20h-4.85zM663.88 449.20h4.85v-4.10h-4.85zM669.81 449.20h4.85v-4.10h-4.85zM675.75 449.20h4.85v-4.10h-4.85zM681.68 449.20h4.85v-2.00h-4.85zM687.61 449.20h4.85v-1.00h-4.85zM693.55 449.20h4.85v-1.00h-4.85zM699.48 449.20h4.85v-1.00h-4.85zM705.41 449.20h4.85v-3.10h-4.85zM711.35 449.20h4.85v-3.10h-4.85zM717.28 449.20h4.85v-4.10h-4.85zM723.21 449.20h4.85v-2.00h-4.85zM729.14 449.20h4.85v-2.00h-4.85zM735.08 449.20h4.85v-3.10h-4.85zM741.01 449.20h4.85v-3.10h-4.85zM746.94 449.20h4.85v-2.00h-4.85zM752.88 449.20h4.85v-1.00h-4.85zM758.81 449.20h4.85v-3.10h-4.85zM764.74 449.20h4.85v-3.10h-4.85zM770.68 449.20h4.85v-4.10h-4.85zM776.61 449.20h4.85v-4.10h-4.85zM782.54 449.20h4.85v-1.00h-4.85zM788.47 449.20h4.85v-1.00h-4.85zM794.41 449.20h4.85v-4.10h-4.85zM800.34 449.20h4.85v-3.10h-4.85zM806.27 449.20h4.85v-4.10h-4.85zM812.21 449.20h4.85v-3.10h-4.85zM818.14 449.20h4.85v-4.10h-4.85zM824.07 449.20h4.85v-2.00h-4.85zM830.01 449.20h4.85v-3.10h-4.85zM835.94 449.20h4.85v-5.10h-4.85zM841.87 449.20h4.85v-5.10h-4.85zM847.80 449.20h4.85v-4.10h-4.85zM853.74 449.20h4.85v-3.10h-4.85zM859.67 449.20h4.85v-1.00h-4.85zM865.60 449.20h4.85v-1.00h-4.85zM871.54 449.20h4.85v-3.10h-4.85zM877.47 449.20h4.85v-4.10h-4.85zM883.40 449.20h4.85v-2.00h-4.85zM889.34 449.20h4.85v-2.00h-4.85zM895.27 449.20h4.85v-2.00h-4.85zM901.20 449.20h4.85v-3.10h-4.85zM907.13 449.20h4.85v-2.00h-4.85zM913.07 449.20h4.85v-4.10h-4.85zM919.00 449.20h4.85v-3.10h-4.85zM924.93 449.20h4.85v-3.10h-4.85zM930.87 449.20h4.85v-1.00h-4.85zM936.80 449.20h4.85v-1.00h-4.85zM942.73 449.20h4.85v-1.00h-4.85zM948.67 449.20h4.85v-2.00h-4.85zM954.60 449.20h4.85v-4.10h-4.85zM960.53 449.20h4.85v-1.00h-4.85zM966.46 449.20h4.85v-1.00h-4.85zM972.40 449.20h4.85v-1.00h-4.85zM978.33 449.20h4.85v-3.10h-4.85zM984.26 449.20h4.85v-4.10h-4.85zM990.20 449.20h4.85v-1.00h-4.85zM996.13 449.20h4.85v-1.00h-4.85zM1002.06 449.20h4.85v-1.00h-4.85zM1008.00 449.20h4.85v-1.00h-4.85zM1013.93 449.20h4.85v-4.10h-4.85zM1019.86 449.20h4.85v-3.10h-4.85zM1025.79 449.20h4.85v-4.10h-4.85zM1031.73 449.20h4.85v-1.00h-4.85zM1037.66 449.20h4.85v-2.00h-4.85zM1043.59 449.20h4.85v-2.00h-4.85zM1049.53 449.20h4.85v-3.10h-4.85zM1055.46 449.20h4.85v-4.10h-4.85zM1061.39 449.20h4.85v-2.00h-4.85zM1067.33 449.20h4.85v-2.00h-4.85zM1073.26 449.20h4.85v-3.10h-4.85zM1079.19 449.20h4.85v-4.10h-4.85zM1085.12 449.20h4.85v-2.00h-4.85zM1091.06 449.20h4.85v-3.10h-4.85zM1096.99 449.20h4.85v-1.00h-4.85zM1102.92 449.20h4.85v-1.00h-4.85zM1108.86 449.20h4.85v-3.10h-4.85zM1114.79 449.20h4.85v-2.00h-4.85zM1120.72 449.20h4.85v-4.10h-4.85zM1126.66 449.20h4.85v-1.00h-4.85zM1132.59 449.20h4.85v-4.10h-4.85zM1138.52 449.20h4.85v-5.10h-4.85zM1144.45 449.20h4.85v-1.00h-4.85zM1150.39 449.20h4.85v-2.00h-4.85zM1156.32 449.20h4.85v-4.10h-4.85zM1162.25 449.20h4.85v-3.10h-4.85zM1168.19 449.20h4.85v-3.10h-4.85zM1174.12 449.20h4.85v-4.10h-4.85zM1180.05 449.20h4.85v-4.10h-4.85zM1185.99 449.20h4.85v-3.10h-4.85zM1191.92 449.20h4.85v-1.00h-4.85zM1197.85 449.20h4.85v-3.10h-4.85zM1203.79 449.20h4.85v-3.10h-4.85zM1209.72 449.20h4.85v-4.10h-4.85zM1215.65 449.20h4.85v-5.10h-4.85zM1221.58 449.20h4.85v-4.10h-4.85zM1227.52 449.20h4.85v-3.10h-4.85zM1233.45 449.20h4.85v-4.10h-4.85zM1239.38 449.20h4.85v-3.10h-4.85zM1245.32 449.20h4.85v-4.10h-4.85zM1251.25 449.20h4.85v-2.00h-4.85zM1257.18 449.20h4.85v-1.00h-4.85zM1263.12 449.20h4.85v-1.00h-4.85zM1269.05 449.20h4.85v-2.00h-4.85zM1274.98 449.20h4.85v-4.10h-4.85zM1280.91 449.20h4.85v-3.10h-4.85zM1286.85 449.20h4.85v-1.00h-4.85zM1292.78 449.20h4.85v-2.00h-4.85zM1298.71 449.20h4.85v-4.10h-4.85zM1304.65 449.20h4.85v-1.00h-4.85zM1310.58 449.20h4.85v-2.00h-4.85zM1316.51 449.20h4.85v-4.10h-4.85zM1322.44 449.20h4.85v-5.10h-4.85zM1328.38 449.20h4.85v-1.00h-4.85zM1334.31 449.20h4.85v-3.10h-4.85zM1340.24 449.20h4.85v-3.10h-4.85zM1346.18 449.20h4.85v-1.00h-4.85zM1352.11 449.20h4.85v-1.00h-4.85zM1358.04 449.20h4.85v-1.00h-4.85zM1363.98 449.20h4.85v-2.00h-4.85zM1369.91 449.20h4.85v-1.00h-4.85zM1375.84 449.20h4.85v-1.00h-4.85zM1381.77 449.20h4.85v-3.10h-4.85zM1387.71 449.20h4.85v-5.10h-4.85zM1393.64 449.20h4.85v-4.10h-4.85zM1399.57 449.20h4.85v-3.10h-4.85zM1405.51 449.20h4.85v-2.00h-4.85zM1411.44 449.20h4.85v-1.00h-4.85zM1417.37 449.20h4.85v-3.10h-4.85zM1423.31 449.20h4.85v-1.00h-4.85zM1429.24 449.20h4.85v-2.00h-4.85zM1435.17 449.20h4.85v-2.00h-4.85zM1441.10 449.20h4.85v-2.00h-4.85zM1447.04 449.20h4.85v-3.10h-4.85zM1452.97 449.20h4.85v-4.10h-4.85zM1458.90 449.20h4.85v-5.10h-4.85zM1464.84 449.20h4.85v-3.10h-4.85zM1470.77 449.20h4.85v-4.10h-4.85zM1476.70 449.20h4.85v-3.10h-4.85zM1482.64 449.20h4.85v-4.10h-4.85zM1488.57 449.20h4.85v-3.10h-4.85zM1494.50 449.20h4.85v-2.00h-4.85zM1500.43 449.20h4.85v-3.10h-4.85zM1506.37 449.20h4.85v-4.10h-4.85zM1512.30 449.20h4.85v-3.10h-4.85zM1518.23 449.20h4.85v-3.10h-4.85zM1524.17 449.20h4.85v-3.10h-4.85zM1530.10 449.20h4.85v-2.00h-4.85zM1536.03 449.20h4.85v-3.10h-4.85zM1541.97 449.20h4.85v-3.10h-4.85zM1547.90 449.20h4.85v-2.00h-4.85zM1553.83 449.20h4.85v-3.10h-4.85zM1559.77 449.20h4.85v-4.10h-4.85zM1565.70 449.20h4.85v-2.00h-4.85zM1571.63 449.20h4.85v-1.00h-4.85zM1577.56 449.20h4.85v-3.10h-4.85zM1583.50 449.20h4.85v-3.10h-4.85zM1589.43 449.20h4.85v-4.10h-4.85zM1595.36 449.20h4.85v-4.10h-4.85zM1601.30 449.20h4.85v-4.10h-4.85zM1607.23 449.20h4.85v-3.10h-4.85zM1613.16 449.20h4.85v-1.00h-4.85zM1619.10 449.20h4.85v-3.10h-4.85zM1625.03 449.20h4.85v-3.10h-4.85zM1630.96 449.20h4.85v-3.10h-4.85zM1636.89 449.20h4.85v-1.00h-4.85zM1642.83 449.20h4.85v-1.00h-4.85zM1648.76 449.20h4.85v-1.00h-4.85zM1654.69 449.20h4.85v-1.00h-4.85z" fill="#2ea636"/><path d="M657.95 509.40h4.85v-18.70h-4.85zM663.88 509.40h4.85v-6.00h-4.85zM669.81 509.40h4.85v-9.00h-4.85zM675.75 509.40h4.85v-6.00h-4.85zM681.68 509.40h4.85v-4.00h-4.85zM687.61 509.40h4.85v-2.00h-4.85zM693.55 509.40h4.85v-1.00h-4.85zM699.48 509.40h4.85v-1.00h-4.85zM705.41 509.40h4.85v-2.00h-4.85zM752.88 509.40h4.85v-1.00h-4.85zM800.34 509.40h4.85v-1.00h-4.85zM824.07 509.40h4.85v-1.00h-4.85zM830.01 509.40h4.85v-1.00h-4.85zM871.54 509.40h4.85v-2.00h-4.85zM978.33 509.40h4.85v-1.00h-4.85zM1013.93 509.40h4.85v-1.00h-4.85zM1043.59 509.40h4.85v-1.00h-4.85zM1156.32 509.40h4.85v-1.00h-4.85zM1298.71 509.40h4.85v-1.00h-4.85zM1304.65 509.40h4.85v-1.00h-4.85zM1310.58 509.40h4.85v-1.00h-4.85zM1340.24 509.40h4.85v-1.00h-4.85zM1381.77 509.40h4.85v-1.00h-4.85zM1411.44 509.40h4.85v-1.00h-4.85zM1447.04 509.40h4.85v-1.00h-4.85zM1636.89 509.40h4.85v-1.00h-4.85z" fill="#2ea636"/><path d="M639.60 227.70H2511.50" stroke="#424242" stroke-width="1.1"/><path d="M639.60 329.40H2511.50" stroke="#424242" stroke-width="1.1"/><path d="M639.60 389.60H2511.50" stroke="#424242" stroke-width="1.1"/><path d="M639.60 449.90H2511.50" stroke="#424242" stroke-width="1.1"/><path d="M639.60 510.10H2511.50" stroke="#424242" stroke-width="1.1"/><path d="M639.60 570.30H2511.50" stroke="#424242" stroke-width="1.1"/><path d="M639.60 630.60H2511.50" stroke="#424242" stroke-width="1.1"/><path d="M639.60 690.80H2511.50" stroke="#424242" stroke-width="1.1"/><path d="M639.60 792.50H2511.50" stroke="#424242" stroke-width="1.1"/><path d="M639.60 879.50H2511.50" stroke="#424242" stroke-width="1.1"/><path d="M639.60 937.00H2511.50" stroke="#424242" stroke-width="1.1"/><path d="M639.60 1009.40H2511.50" stroke="#424242" stroke-width="1.1"/><rect x="639.60" y="228.00" width="1020.48" height="101.50" fill="#1a4430"/><path d="M640.35 231.20h4.70V329.50h-4.70zM646.28 228.00h4.70V329.50h-4.70zM652.22 228.00h4.70V329.50h-4.70zM658.15 228.00h4.70V329.50h-4.70zM664.08 228.00h4.70V329.50h-4.70zM670.01 228.00h4.70V329.50h-4.70zM675.95 228.00h4.70V329.50h-4.70zM681.88 228.00h4.70V329.50h-4.70zM687.81 228.00h4.70V329.50h-4.70zM693.75 228.00h4.70V329.50h-4.70zM699.68 228.00h4.70V329.50h-4.70zM705.61 228.00h4.70V329.50h-4.70zM711.55 228.00h4.70V329.50h-4.70zM717.48 228.00h4.70V329.50h-4.70zM723.41 228.00h4.70V329.50h-4.70zM729.35 228.00h4.70V329.50h-4.70zM735.28 228.00h4.70V329.50h-4.70zM741.21 228.00h4.70V329.50h-4.70zM747.14 228.00h4.70V329.50h-4.70zM753.08 228.00h4.70V329.50h-4.70zM759.01 228.00h4.70V329.50h-4.70zM764.94 228.00h4.70V329.50h-4.70zM770.88 228.00h4.70V329.50h-4.70zM776.81 228.00h4.70V329.50h-4.70zM782.74 228.00h4.70V329.50h-4.70zM788.67 228.00h4.70V329.50h-4.70zM794.61 228.00h4.70V329.50h-4.70zM800.54 228.00h4.70V329.50h-4.70zM806.47 228.00h4.70V329.50h-4.70zM812.41 228.00h4.70V329.50h-4.70zM818.34 228.00h4.70V329.50h-4.70zM824.27 228.00h4.70V329.50h-4.70zM830.21 228.00h4.70V329.50h-4.70zM836.14 228.00h4.70V329.50h-4.70zM842.07 228.00h4.70V329.50h-4.70zM848.00 228.00h4.70V329.50h-4.70zM853.94 228.00h4.70V329.50h-4.70zM859.87 228.00h4.70V329.50h-4.70zM865.80 228.00h4.70V329.50h-4.70zM871.74 228.00h4.70V329.50h-4.70zM877.67 228.00h4.70V329.50h-4.70zM883.60 228.00h4.70V329.50h-4.70zM889.54 228.00h4.70V329.50h-4.70zM895.47 228.00h4.70V329.50h-4.70zM901.40 228.00h4.70V329.50h-4.70zM907.34 228.00h4.70V329.50h-4.70zM913.27 228.00h4.70V329.50h-4.70zM919.20 228.00h4.70V329.50h-4.70zM925.13 228.00h4.70V329.50h-4.70zM931.07 228.00h4.70V329.50h-4.70zM937.00 228.00h4.70V329.50h-4.70zM942.93 228.00h4.70V329.50h-4.70zM948.87 228.00h4.70V329.50h-4.70zM954.80 228.00h4.70V329.50h-4.70zM960.73 228.00h4.70V329.50h-4.70zM966.66 228.00h4.70V329.50h-4.70zM972.60 228.00h4.70V329.50h-4.70zM978.53 228.00h4.70V329.50h-4.70zM984.46 228.00h4.70V329.50h-4.70zM990.40 228.00h4.70V329.50h-4.70zM996.33 228.00h4.70V329.50h-4.70zM1002.26 228.00h4.70V329.50h-4.70zM1008.20 228.00h4.70V329.50h-4.70zM1014.13 228.00h4.70V329.50h-4.70zM1020.06 228.00h4.70V329.50h-4.70zM1025.99 228.00h4.70V329.50h-4.70zM1031.93 228.00h4.70V329.50h-4.70zM1037.86 228.00h4.70V329.50h-4.70zM1043.79 228.00h4.70V329.50h-4.70zM1049.73 228.00h4.70V329.50h-4.70zM1055.66 228.00h4.70V329.50h-4.70zM1061.59 228.00h4.70V329.50h-4.70zM1067.53 228.00h4.70V329.50h-4.70zM1073.46 228.00h4.70V329.50h-4.70zM1079.39 228.00h4.70V329.50h-4.70zM1085.33 228.00h4.70V329.50h-4.70zM1091.26 228.00h4.70V329.50h-4.70zM1097.19 228.00h4.70V329.50h-4.70zM1103.12 228.00h4.70V329.50h-4.70zM1109.06 228.00h4.70V329.50h-4.70zM1114.99 228.00h4.70V329.50h-4.70zM1120.92 228.00h4.70V329.50h-4.70zM1126.86 228.00h4.70V329.50h-4.70zM1132.79 228.00h4.70V329.50h-4.70zM1138.72 228.00h4.70V329.50h-4.70zM1144.65 228.00h4.70V329.50h-4.70zM1150.59 228.00h4.70V329.50h-4.70zM1156.52 228.00h4.70V329.50h-4.70zM1162.45 228.00h4.70V329.50h-4.70zM1168.39 228.00h4.70V329.50h-4.70zM1174.32 228.00h4.70V329.50h-4.70zM1180.25 228.00h4.70V329.50h-4.70zM1186.19 228.00h4.70V329.50h-4.70zM1192.12 228.00h4.70V329.50h-4.70zM1198.05 228.00h4.70V329.50h-4.70zM1203.99 228.00h4.70V329.50h-4.70zM1209.92 228.00h4.70V329.50h-4.70zM1215.85 228.00h4.70V329.50h-4.70zM1221.78 228.00h4.70V329.50h-4.70zM1227.72 228.00h4.70V329.50h-4.70zM1233.65 228.00h4.70V329.50h-4.70zM1239.58 228.00h4.70V329.50h-4.70zM1245.52 228.00h4.70V329.50h-4.70zM1251.45 228.00h4.70V329.50h-4.70zM1257.38 228.00h4.70V329.50h-4.70zM1263.32 228.00h4.70V329.50h-4.70zM1269.25 228.00h4.70V329.50h-4.70zM1275.18 228.00h4.70V329.50h-4.70zM1281.11 228.00h4.70V329.50h-4.70zM1287.05 228.00h4.70V329.50h-4.70zM1292.98 228.00h4.70V329.50h-4.70zM1298.91 228.00h4.70V329.50h-4.70zM1304.85 228.00h4.70V329.50h-4.70zM1310.78 228.00h4.70V329.50h-4.70zM1316.71 228.00h4.70V329.50h-4.70zM1322.64 228.00h4.70V329.50h-4.70zM1328.58 228.00h4.70V329.50h-4.70zM1334.51 228.00h4.70V329.50h-4.70zM1340.44 228.00h4.70V329.50h-4.70zM1346.38 228.00h4.70V329.50h-4.70zM1352.31 228.00h4.70V329.50h-4.70zM1358.24 228.00h4.70V329.50h-4.70zM1364.18 228.00h4.70V329.50h-4.70zM1370.11 228.00h4.70V329.50h-4.70zM1376.04 228.00h4.70V329.50h-4.70zM1381.97 228.00h4.70V329.50h-4.70zM1387.91 228.00h4.70V329.50h-4.70zM1393.84 228.00h4.70V329.50h-4.70zM1399.77 228.00h4.70V329.50h-4.70zM1405.71 228.00h4.70V329.50h-4.70zM1411.64 228.00h4.70V329.50h-4.70zM1417.57 228.00h4.70V329.50h-4.70zM1423.51 228.00h4.70V329.50h-4.70zM1429.44 228.00h4.70V329.50h-4.70zM1435.37 228.00h4.70V329.50h-4.70zM1441.30 228.00h4.70V329.50h-4.70zM1447.24 228.00h4.70V329.50h-4.70zM1453.17 228.00h4.70V329.50h-4.70zM1459.10 228.00h4.70V329.50h-4.70zM1465.04 228.00h4.70V329.50h-4.70zM1470.97 228.00h4.70V329.50h-4.70zM1476.90 228.00h4.70V329.50h-4.70zM1482.84 228.00h4.70V329.50h-4.70zM1488.77 228.00h4.70V329.50h-4.70zM1494.70 228.00h4.70V329.50h-4.70zM1500.63 228.00h4.70V329.50h-4.70zM1506.57 228.00h4.70V329.50h-4.70zM1512.50 228.00h4.70V329.50h-4.70zM1518.43 228.00h4.70V329.50h-4.70zM1524.37 228.00h4.70V329.50h-4.70zM1530.30 228.00h4.70V329.50h-4.70zM1536.23 228.00h4.70V329.50h-4.70zM1542.17 228.00h4.70V329.50h-4.70zM1548.10 228.00h4.70V329.50h-4.70zM1554.03 228.00h4.70V329.50h-4.70zM1559.97 228.00h4.70V329.50h-4.70zM1565.90 228.00h4.70V329.50h-4.70zM1571.83 228.00h4.70V329.50h-4.70zM1577.76 228.00h4.70V329.50h-4.70zM1583.70 228.00h4.70V329.50h-4.70zM1589.63 228.00h4.70V329.50h-4.70zM1595.56 228.00h4.70V329.50h-4.70zM1601.50 228.00h4.70V329.50h-4.70zM1607.43 228.00h4.70V329.50h-4.70zM1613.36 228.00h4.70V329.50h-4.70zM1619.30 228.00h4.70V329.50h-4.70zM1625.23 228.00h4.70V329.50h-4.70zM1631.16 228.00h4.70V329.50h-4.70zM1637.09 228.00h4.70V329.50h-4.70zM1643.03 228.00h4.70V329.50h-4.70zM1648.96 228.00h4.70V329.50h-4.70zM1654.89 228.00h4.70V329.50h-4.70z" fill="#1e9055"/><rect x="639.60" y="227.6" width="5.6" height="3.6" fill="#1b1b1b"/><polyline points="658.0,226.6 660.4,226.2 666.3,184.0 672.2,181.6 678.2,180.2 684.1,179.3 690.0,179.1 696.0,178.7 701.9,179.2 707.8,178.7 713.8,179.1 719.7,179.0 725.6,178.5 731.6,179.0 737.5,178.5 743.4,178.8 749.4,178.5 755.3,182.8 761.2,183.0 767.2,181.0 773.1,179.5 779.0,179.3 785.0,179.8 790.9,179.0 796.8,178.8 802.8,179.2 808.7,179.9 814.6,179.7 820.6,179.3 826.5,180.0 832.4,179.0 838.4,181.6 844.3,180.8 850.2,179.7 856.2,179.0 862.1,178.6 868.0,178.7 874.0,179.5 879.9,178.9 885.8,179.2 891.8,179.5 897.7,179.2 903.6,179.3 909.6,179.8 915.5,178.9 921.4,178.5 927.4,178.5 933.3,179.2 939.2,179.2 945.1,181.0 951.1,179.8 957.0,179.6 962.9,179.4 968.9,179.1 974.8,179.6 980.7,179.7 986.7,179.1 992.6,179.3 998.5,179.3 1004.5,181.2 1010.4,180.7 1016.3,180.3 1022.3,179.4 1028.2,180.0 1034.1,179.1 1040.1,179.1 1046.0,179.6 1051.9,178.9 1057.9,179.1 1063.8,178.6 1069.7,179.2 1075.7,179.6 1081.6,179.6 1087.5,180.0 1093.5,179.3 1099.4,179.6 1105.3,179.6 1111.3,179.5 1117.2,179.3 1123.1,179.8 1129.1,180.2 1135.0,179.7 1140.9,179.7 1146.9,178.8 1152.8,181.0 1158.7,180.4 1164.7,180.0 1170.6,180.3 1176.5,180.2 1182.5,179.4 1188.4,179.2 1194.3,179.5 1200.3,178.7 1206.2,179.0 1212.1,178.7 1218.1,181.0 1224.0,179.5 1229.9,178.8 1235.9,179.4 1241.8,178.8 1247.7,178.7 1253.7,178.9 1259.6,179.6 1265.5,178.9 1271.5,179.0 1277.4,179.2 1283.3,179.8 1289.3,180.0 1295.2,181.4 1301.1,180.8 1307.1,179.6 1313.0,179.3 1318.9,179.1 1324.9,179.8 1330.8,180.2 1336.7,179.2 1342.7,178.8 1348.6,178.7 1354.5,178.6 1360.5,179.0 1366.4,178.2 1372.3,180.8 1378.3,180.1 1384.2,179.3 1390.1,178.6 1396.1,178.9 1402.0,178.9 1407.9,179.2 1413.9,179.9 1419.8,179.8 1425.7,179.6 1431.7,181.0 1437.6,180.2 1443.5,180.0 1449.5,179.0 1455.4,179.7 1461.3,179.9 1467.3,180.1 1473.2,180.1 1479.1,179.5 1485.1,179.2 1491.0,178.7 1496.9,179.2 1502.9,180.6 1508.8,179.3 1514.7,178.7 1520.7,178.6 1526.6,178.5 1532.5,178.7 1538.4,178.4 1544.4,178.2 1550.3,178.3 1556.2,178.3 1562.2,178.6 1568.1,178.3 1574.0,179.4 1580.0,178.4 1585.9,179.1 1591.8,181.0 1597.8,179.6 1603.7,179.1 1609.6,179.0 1615.6,179.0 1621.5,178.6 1627.4,179.5 1633.4,180.1 1639.3,181.2 1645.2,180.1 1651.2,179.6 1657.1,178.9 1660.1,179.6" fill="none" stroke="#1ba3c6" stroke-width="1.8" stroke-linejoin="round" /><path d="M639.60 226.9H1660.08" stroke="#de7e30" stroke-width="1.7"/><polyline points="639.6,569.3 642.6,569.3 648.5,569.3 654.4,569.3 660.4,559.6 666.3,568.4 672.2,565.9 678.2,556.2 684.1,533.4 690.0,521.6 696.0,518.4 701.9,522.3 707.8,558.9 713.8,555.9 719.7,565.9 725.6,561.7 731.6,564.1 737.5,557.3 743.4,553.7 749.4,537.9 755.3,547.2 761.2,568.9 767.2,555.9 773.1,564.8 779.0,567.0 785.0,530.6 790.9,538.2 796.8,564.2 802.8,564.2 808.7,567.2 814.6,550.6 820.6,560.3 826.5,550.6 832.4,568.4 838.4,567.0 844.3,567.0 850.2,557.8 856.2,556.2 862.1,529.6 868.0,522.3 874.0,556.9 879.9,564.8 885.8,531.6 891.8,537.9 897.7,540.3 903.6,567.9 909.6,549.5 915.5,560.3 921.4,551.3 927.4,549.3 933.3,528.5 939.2,524.6 945.1,521.6 951.1,543.5 957.0,565.2 962.9,530.2 968.9,533.4 974.8,516.8 980.7,564.8 986.7,556.9 992.6,529.6 998.5,527.1 1004.5,528.5 1010.4,526.0 1016.3,567.0 1022.3,568.4 1028.2,564.2 1034.1,532.0 1040.1,537.9 1046.0,554.1 1051.9,548.2 1057.9,568.9 1063.8,541.7 1069.7,537.5 1075.7,538.5 1081.6,562.4 1087.5,552.0 1093.5,568.9 1099.4,533.4 1105.3,529.6 1111.3,553.4 1117.2,548.2 1123.1,569.3 1129.1,519.5 1135.0,565.9 1140.9,567.2 1146.9,541.7 1152.8,550.6 1158.7,558.9 1164.7,564.5 1170.6,555.1 1176.5,557.8 1182.5,548.2 1188.4,560.3 1194.3,511.6 1200.3,556.5 1206.2,560.1 1212.1,561.4 1218.1,549.0 1224.0,563.1 1229.9,561.7 1235.9,563.1 1241.8,547.2 1247.7,569.3 1253.7,545.1 1259.6,530.6 1265.5,519.5 1271.5,537.5 1277.4,569.3 1283.3,549.3 1289.3,527.8 1295.2,547.2 1301.1,564.5 1307.1,511.9 1313.0,542.3 1318.9,568.4 1324.9,565.2 1330.8,528.2 1336.7,557.8 1342.7,560.3 1348.6,532.4 1354.5,530.2 1360.5,528.2 1366.4,531.6 1372.3,521.3 1378.3,523.7 1384.2,536.8 1390.1,567.2 1396.1,565.9 1402.0,560.3 1407.9,557.3 1413.9,557.3 1419.8,527.1 1425.7,547.9 1431.7,531.0 1437.6,540.7 1443.5,547.2 1449.5,525.1 1455.4,564.8 1461.3,567.0 1467.3,565.6 1473.2,550.0 1479.1,550.0 1485.1,567.0 1491.0,565.6 1496.9,554.1 1502.9,545.1 1508.8,567.0 1514.7,546.2 1520.7,564.8 1526.6,564.8 1532.5,558.7 1538.4,541.7 1544.4,555.1 1550.3,548.2 1556.2,567.2 1562.2,565.9 1568.1,564.8 1574.0,538.2 1580.0,533.4 1585.9,564.8 1591.8,567.9 1597.8,567.9 1603.7,564.8 1609.6,562.4 1615.6,555.1 1621.5,523.0 1627.4,563.1 1633.4,564.2 1639.3,561.0 1645.2,528.8 1651.2,528.8 1657.1,530.2 1660.1,531.0" fill="none" stroke="#43bf48" stroke-width="1.9" stroke-linejoin="round" /><polyline points="639.6,629.9 642.6,629.9 648.5,629.9 654.4,629.9 660.4,601.8 666.3,576.9 672.2,594.2 678.2,598.4 684.1,623.3 690.0,624.4 696.0,623.3 701.9,617.3 707.8,621.9 713.8,613.6 719.7,623.7 725.6,595.6 731.6,617.3 737.5,613.6 743.4,622.3 749.4,622.6 755.3,617.3 761.2,597.0 767.2,616.8 773.1,623.3 779.0,615.4 785.0,625.3 790.9,621.2 796.8,597.0 802.8,608.1 808.7,615.4 814.6,620.1 820.6,620.1 826.5,616.4 832.4,605.3 838.4,614.3 844.3,617.0 850.2,617.3 856.2,620.5 862.1,627.8 868.0,627.8 874.0,616.4 879.9,613.2 885.8,626.5 891.8,625.1 897.7,615.7 903.6,605.3 909.6,617.3 915.5,618.7 921.4,622.3 927.4,621.2 933.3,628.8 939.2,627.8 945.1,627.8 951.1,623.7 957.0,617.7 962.9,627.4 968.9,629.2 974.8,622.6 980.7,610.4 986.7,619.8 992.6,628.8 998.5,629.2 1004.5,629.2 1010.4,629.2 1016.3,600.2 1022.3,606.7 1028.2,616.4 1034.1,628.4 1040.1,624.2 1046.0,611.2 1051.9,616.4 1057.9,613.6 1063.8,623.3 1069.7,624.2 1075.7,626.7 1081.6,617.3 1087.5,614.6 1093.5,592.8 1099.4,628.4 1105.3,627.0 1111.3,620.1 1117.2,622.6 1123.1,609.0 1129.1,621.5 1135.0,617.3 1140.9,615.9 1146.9,623.3 1152.8,624.7 1158.7,598.0 1164.7,605.7 1170.6,618.7 1176.5,617.3 1182.5,618.4 1188.4,623.3 1194.3,628.4 1200.3,611.2 1206.2,620.5 1212.1,618.4 1218.1,617.0 1224.0,615.7 1229.9,603.5 1235.9,611.8 1241.8,614.3 1247.7,618.4 1253.7,623.3 1259.6,629.2 1265.5,629.2 1271.5,619.5 1277.4,615.4 1283.3,622.3 1289.3,628.4 1295.2,623.3 1301.1,607.4 1307.1,615.9 1313.0,624.2 1318.9,615.4 1324.9,616.4 1330.8,628.8 1336.7,612.2 1342.7,614.6 1348.6,627.8 1354.5,627.8 1360.5,627.8 1366.4,627.8 1372.3,627.8 1378.3,624.0 1384.2,624.0 1390.1,617.3 1396.1,616.4 1402.0,618.7 1407.9,609.4 1413.9,606.3 1419.8,628.4 1425.7,623.3 1431.7,628.4 1437.6,623.3 1443.5,619.8 1449.5,611.5 1455.4,616.4 1461.3,616.4 1467.3,617.7 1473.2,617.7 1479.1,610.4 1485.1,604.3 1491.0,612.9 1496.9,620.1 1502.9,620.5 1508.8,617.0 1514.7,615.0 1520.7,588.0 1526.6,599.8 1532.5,615.0 1538.4,623.7 1544.4,621.5 1550.3,615.4 1556.2,600.2 1562.2,608.1 1568.1,615.7 1574.0,625.3 1580.0,627.4 1585.9,607.4 1591.8,600.2 1597.8,613.2 1603.7,615.9 1609.6,617.3 1615.6,621.5 1621.5,626.7 1627.4,589.7 1633.4,611.2 1639.3,617.3 1645.2,625.1 1651.2,627.4 1657.1,627.4 1660.1,627.4" fill="none" stroke="#43bf48" stroke-width="1.9" stroke-linejoin="round" /><polyline points="639.6,690.2 642.6,690.2 648.5,690.2 654.4,690.2 660.4,634.9 666.3,687.8 672.2,678.5 678.2,680.6 684.1,684.7 690.0,689.6 696.0,689.3 701.9,689.3 707.8,689.3 713.8,689.3 719.7,689.3 725.6,689.3 731.6,689.3 737.5,689.3 743.4,689.3 749.4,689.3 755.3,689.3 761.2,689.3 767.2,689.3 773.1,689.3 779.0,689.3 785.0,689.3 790.9,689.3 796.8,689.3 802.8,689.3 808.7,689.3 814.6,689.3 820.6,689.3 826.5,689.3 832.4,690.2 838.4,690.2 844.3,690.2 850.2,690.2 856.2,690.2 862.1,690.2 868.0,690.2 874.0,690.2 879.9,690.2 885.8,690.2 891.8,690.2 897.7,690.2 903.6,690.2 909.6,690.2 915.5,690.2 921.4,690.2 927.4,690.2 933.3,690.2 939.2,690.2 945.1,690.2 951.1,690.2 957.0,690.2 962.9,690.2 968.9,690.2 974.8,690.2 980.7,690.2 986.7,690.2 992.6,690.2 998.5,690.2 1004.5,690.2 1010.4,690.2 1016.3,690.2 1022.3,690.2 1028.2,690.2 1034.1,690.2 1040.1,690.2 1046.0,690.2 1051.9,690.2 1057.9,690.2 1063.8,690.2 1069.7,690.2 1075.7,690.2 1081.6,690.2 1087.5,690.2 1093.5,690.2 1099.4,690.2 1105.3,690.2 1111.3,690.2 1117.2,690.2 1123.1,690.2 1129.1,690.2 1135.0,690.2 1140.9,690.2 1146.9,690.2 1152.8,690.2 1158.7,690.2 1164.7,690.2 1170.6,690.2 1176.5,690.2 1182.5,690.2 1188.4,690.2 1194.3,690.2 1200.3,690.2 1206.2,690.2 1212.1,690.2 1218.1,690.2 1224.0,690.2 1229.9,690.2 1235.9,690.2 1241.8,690.2 1247.7,690.2 1253.7,690.2 1259.6,690.2 1265.5,690.2 1271.5,690.2 1277.4,690.2 1283.3,690.2 1289.3,690.2 1295.2,690.2 1301.1,690.2 1307.1,690.2 1313.0,690.2 1318.9,690.2 1324.9,690.2 1330.8,690.2 1336.7,690.2 1342.7,690.2 1348.6,690.2 1354.5,690.2 1360.5,690.2 1366.4,690.2 1372.3,690.2 1378.3,690.2 1384.2,690.2 1390.1,690.2 1396.1,690.2 1402.0,690.2 1407.9,690.2 1413.9,690.2 1419.8,690.2 1425.7,690.2 1431.7,690.2 1437.6,690.2 1443.5,690.2 1449.5,690.2 1455.4,690.2 1461.3,690.2 1467.3,690.2 1473.2,690.2 1479.1,690.2 1485.1,690.2 1491.0,690.2 1496.9,690.2 1502.9,690.2 1508.8,690.2 1514.7,690.2 1520.7,690.2 1526.6,690.2 1532.5,690.2 1538.4,690.2 1544.4,690.2 1550.3,690.2 1556.2,690.2 1562.2,690.2 1568.1,690.2 1574.0,690.2 1580.0,690.2 1585.9,690.2 1591.8,690.2 1597.8,690.2 1603.7,690.2 1609.6,690.2 1615.6,690.2 1621.5,690.2 1627.4,690.2 1633.4,690.2 1639.3,690.2 1645.2,690.2 1651.2,690.2 1657.1,690.2 1660.1,690.2" fill="none" stroke="#43bf48" stroke-width="1.8" stroke-linejoin="round" /><polyline points="639.6,791.0 642.6,791.2 648.5,791.2 654.4,791.2 660.4,787.3 666.3,787.6 672.2,787.4 678.2,788.5 684.1,787.4 690.0,787.2 696.0,788.6 701.9,788.2 707.8,787.7 713.8,788.3 719.7,788.3 725.6,787.5 731.6,788.6 737.5,788.3 743.4,788.2 749.4,787.9 755.3,787.2 761.2,787.6 767.2,788.2 773.1,787.8 779.0,788.6 785.0,787.7 790.9,787.5 796.8,787.5 802.8,788.5 808.7,787.9 814.6,788.3 820.6,788.1 826.5,788.3 832.4,787.9 838.4,788.3 844.3,788.3 850.2,787.8 856.2,788.5 862.1,787.4 868.0,787.4 874.0,788.3 879.9,788.4 885.8,788.1 891.8,788.0 897.7,787.2 903.6,788.1 909.6,788.5 915.5,788.4 921.4,787.5 927.4,787.6 933.3,788.0 939.2,787.8 945.1,788.5 951.1,787.8 957.0,788.5 962.9,788.5 968.9,787.9 974.8,787.2 980.7,787.5 986.7,788.3 992.6,787.9 998.5,788.0 1004.5,787.9 1010.4,788.3 1016.3,788.0 1022.3,787.6 1028.2,787.9 1034.1,788.3 1040.1,787.8 1046.0,787.9 1051.9,788.2 1057.9,787.9 1063.8,788.5 1069.7,788.4 1075.7,787.6 1081.6,788.5 1087.5,787.4 1093.5,787.8 1099.4,787.5 1105.3,788.1 1111.3,788.5 1117.2,788.2 1123.1,787.4 1129.1,788.6 1135.0,788.5 1140.9,787.9 1146.9,788.4 1152.8,787.8 1158.7,787.7 1164.7,787.6 1170.6,787.2 1176.5,787.8 1182.5,787.7 1188.4,787.9 1194.3,788.6 1200.3,788.6 1206.2,787.6 1212.1,788.3 1218.1,787.4 1224.0,788.5 1229.9,787.6 1235.9,788.5 1241.8,788.2 1247.7,787.3 1253.7,787.8 1259.6,788.5 1265.5,788.3 1271.5,788.4 1277.4,788.4 1283.3,787.7 1289.3,788.5 1295.2,787.4 1301.1,787.5 1307.1,787.4 1313.0,787.5 1318.9,787.6 1324.9,787.6 1330.8,787.4 1336.7,787.2 1342.7,787.2 1348.6,788.0 1354.5,787.9 1360.5,787.3 1366.4,787.8 1372.3,788.4 1378.3,787.9 1384.2,788.6 1390.1,788.4 1396.1,788.1 1402.0,787.7 1407.9,787.4 1413.9,788.2 1419.8,787.4 1425.7,788.4 1431.7,788.1 1437.6,787.5 1443.5,787.8 1449.5,787.8 1455.4,788.5 1461.3,788.0 1467.3,788.6 1473.2,787.7 1479.1,787.7 1485.1,787.9 1491.0,787.9 1496.9,787.6 1502.9,787.8 1508.8,787.2 1514.7,787.5 1520.7,787.9 1526.6,788.1 1532.5,788.4 1538.4,787.7 1544.4,787.4 1550.3,788.1 1556.2,788.4 1562.2,788.1 1568.1,788.3 1574.0,787.9 1580.0,788.4 1585.9,788.4 1591.8,788.4 1597.8,788.2 1603.7,787.2 1609.6,787.7 1615.6,788.4 1621.5,788.1 1627.4,788.2 1633.4,787.2 1639.3,788.2 1645.2,787.9 1651.2,787.3 1657.1,787.6 1660.1,788.2" fill="none" stroke="#2dcc72" stroke-width="1.8" stroke-linejoin="round" /><polyline points="639.6,789.6 642.6,790.0 648.5,790.6 654.4,791.2 660.4,789.8 666.3,790.1 672.2,789.6 678.2,789.9 684.1,789.9 690.0,789.9 696.0,790.2 701.9,789.7 707.8,789.7 713.8,789.9 719.7,789.8 725.6,790.1 731.6,790.1 737.5,790.1 743.4,789.7 749.4,789.8 755.3,789.6 761.2,789.7 767.2,790.2 773.1,790.2 779.0,790.2 785.0,789.7 790.9,789.7 796.8,790.0 802.8,790.1 808.7,790.0 814.6,789.6 820.6,790.2 826.5,790.1 832.4,789.7 838.4,789.8 844.3,790.2 850.2,789.8 856.2,790.1 862.1,789.6 868.0,790.2 874.0,789.7 879.9,790.2 885.8,789.8 891.8,789.6 897.7,790.2 903.6,789.9 909.6,789.9 915.5,790.1 921.4,789.7 927.4,789.7 933.3,789.7 939.2,789.6 945.1,789.8 951.1,790.0 957.0,789.8 962.9,789.9 968.9,789.9 974.8,789.9 980.7,789.6 986.7,789.7 992.6,790.1 998.5,789.8 1004.5,789.9 1010.4,789.6 1016.3,789.7 1022.3,790.1 1028.2,789.9 1034.1,790.2 1040.1,790.0 1046.0,789.9 1051.9,789.9 1057.9,789.9 1063.8,790.0 1069.7,790.2 1075.7,789.9 1081.6,790.1 1087.5,789.6 1093.5,789.6 1099.4,789.6 1105.3,790.1 1111.3,789.7 1117.2,790.0 1123.1,790.2 1129.1,789.7 1135.0,789.8 1140.9,790.2 1146.9,789.7 1152.8,789.9 1158.7,789.7 1164.7,790.1 1170.6,789.9 1176.5,789.6 1182.5,790.0 1188.4,789.6 1194.3,790.1 1200.3,789.6 1206.2,789.6 1212.1,789.7 1218.1,789.8 1224.0,790.1 1229.9,789.7 1235.9,789.9 1241.8,789.6 1247.7,790.0 1253.7,789.6 1259.6,790.0 1265.5,789.6 1271.5,789.6 1277.4,789.9 1283.3,789.9 1289.3,789.7 1295.2,789.9 1301.1,789.6 1307.1,789.6 1313.0,789.8 1318.9,790.1 1324.9,789.9 1330.8,789.8 1336.7,789.7 1342.7,790.1 1348.6,789.7 1354.5,790.2 1360.5,790.1 1366.4,789.9 1372.3,789.8 1378.3,790.0 1384.2,789.8 1390.1,790.0 1396.1,789.8 1402.0,789.6 1407.9,789.6 1413.9,789.7 1419.8,789.6 1425.7,790.2 1431.7,789.7 1437.6,789.8 1443.5,789.7 1449.5,789.7 1455.4,790.2 1461.3,789.7 1467.3,789.8 1473.2,789.6 1479.1,789.9 1485.1,789.7 1491.0,789.6 1496.9,789.6 1502.9,789.6 1508.8,789.8 1514.7,790.0 1520.7,790.1 1526.6,790.1 1532.5,789.8 1538.4,790.2 1544.4,790.1 1550.3,789.6 1556.2,790.2 1562.2,790.1 1568.1,789.6 1574.0,789.9 1580.0,790.1 1585.9,790.0 1591.8,790.0 1597.8,789.7 1603.7,789.6 1609.6,789.6 1615.6,789.9 1621.5,790.0 1627.4,789.9 1633.4,790.1 1639.3,789.9 1645.2,790.0 1651.2,790.1 1657.1,789.6 1660.1,789.9" fill="none" stroke="#f28a2e" stroke-width="1.7" stroke-linejoin="round" /><polyline points="639.6,786.7 642.6,786.7 648.5,791.4 654.4,791.4 660.4,782.8 666.3,764.2 672.2,747.6 678.2,757.2 684.1,760.0 690.0,772.5 696.0,776.6 701.9,770.4 707.8,775.2 713.8,766.0 719.7,772.5 725.6,767.9 731.6,777.6 737.5,770.7 743.4,769.3 749.4,767.6 755.3,776.6 761.2,779.4 767.2,764.8 773.1,761.4 779.0,763.7 785.0,757.7 790.9,765.5 796.8,773.4 802.8,776.6 808.7,766.5 814.6,766.5 820.6,769.3 826.5,768.7 832.4,770.7 838.4,769.7 844.3,756.5 850.2,758.6 856.2,769.7 862.1,763.5 868.0,758.2 874.0,775.9 879.9,770.7 885.8,765.5 891.8,772.9 897.7,770.7 903.6,773.4 909.6,768.7 915.5,763.7 921.4,767.6 927.4,756.8 933.3,770.7 939.2,770.4 945.1,769.3 951.1,779.0 957.0,763.5 962.9,765.5 968.9,769.7 974.8,769.3 980.7,775.6 986.7,770.7 992.6,764.6 998.5,769.3 1004.5,770.4 1010.4,765.5 1016.3,770.4 1022.3,777.3 1028.2,765.5 1034.1,769.3 1040.1,763.5 1046.0,772.5 1051.9,778.7 1057.9,769.7 1063.8,763.2 1069.7,766.5 1075.7,763.5 1081.6,761.4 1087.5,772.9 1093.5,768.3 1099.4,770.4 1105.3,766.5 1111.3,767.6 1117.2,763.5 1123.1,762.4 1129.1,767.6 1135.0,767.6 1140.9,767.6 1146.9,761.4 1152.8,772.9 1158.7,764.8 1164.7,773.4 1170.6,770.7 1176.5,769.3 1182.5,763.7 1188.4,763.7 1194.3,773.4 1200.3,772.5 1206.2,772.5 1212.1,767.6 1218.1,757.7 1224.0,761.4 1229.9,765.5 1235.9,769.3 1241.8,774.5 1247.7,764.8 1253.7,763.5 1259.6,761.4 1265.5,767.6 1271.5,768.7 1277.4,770.7 1283.3,766.5 1289.3,763.5 1295.2,768.7 1301.1,763.7 1307.1,770.7 1313.0,777.6 1318.9,761.4 1324.9,758.2 1330.8,760.7 1336.7,767.6 1342.7,774.5 1348.6,769.3 1354.5,765.5 1360.5,762.4 1366.4,765.5 1372.3,763.5 1378.3,771.1 1384.2,777.3 1390.1,772.5 1396.1,757.7 1402.0,761.4 1407.9,761.4 1413.9,772.0 1419.8,774.3 1425.7,775.6 1431.7,765.5 1437.6,763.5 1443.5,769.3 1449.5,765.5 1455.4,772.5 1461.3,761.4 1467.3,763.5 1473.2,764.6 1479.1,769.3 1485.1,773.4 1491.0,770.4 1496.9,763.5 1502.9,766.5 1508.8,764.6 1514.7,766.5 1520.7,771.5 1526.6,766.0 1532.5,759.3 1538.4,762.8 1544.4,759.6 1550.3,764.8 1556.2,773.8 1562.2,774.3 1568.1,771.5 1574.0,769.3 1580.0,767.3 1585.9,763.5 1591.8,771.5 1597.8,769.3 1603.7,763.7 1609.6,762.4 1615.6,759.3 1621.5,763.5 1627.4,766.5 1633.4,769.7 1639.3,765.5 1645.2,768.3 1651.2,773.4 1657.1,767.6 1660.1,765.5" fill="none" stroke="#e8184e" stroke-width="1.9" stroke-linejoin="round" /><polyline points="639.6,783.3 642.6,783.3 648.5,790.5 654.4,790.5 660.4,779.2 666.3,714.4 672.2,717.2 678.2,717.2 684.1,725.2 690.0,727.7 696.0,733.2 701.9,718.0 707.8,722.2 713.8,699.6 719.7,718.0 725.6,720.8 731.6,728.3 737.5,709.3 743.4,718.0 749.4,715.8 755.3,734.9 761.2,737.9 767.2,714.4 773.1,702.0 779.0,720.8 785.0,701.0 790.9,711.4 796.8,721.3 802.8,722.2 808.7,715.8 814.6,711.1 820.6,715.8 826.5,717.2 832.4,717.2 838.4,722.2 844.3,707.5 850.2,708.6 856.2,713.5 862.1,700.0 868.0,707.2 874.0,731.4 879.9,719.7 885.8,705.2 891.8,712.1 897.7,712.1 903.6,725.2 909.6,728.0 915.5,710.3 921.4,707.9 927.4,701.4 933.3,707.2 939.2,719.0 945.1,718.0 951.1,732.8 957.0,711.1 962.9,701.4 968.9,724.1 974.8,707.9 980.7,726.3 986.7,719.7 992.6,709.3 998.5,702.8 1004.5,720.4 1010.4,709.3 1016.3,721.3 1022.3,721.8 1028.2,713.5 1034.1,705.2 1040.1,711.4 1046.0,714.4 1051.9,730.1 1057.9,722.4 1063.8,703.8 1069.7,712.8 1075.7,698.2 1081.6,711.4 1087.5,722.7 1093.5,722.2 1099.4,730.1 1105.3,710.0 1111.3,711.7 1117.2,711.1 1123.1,713.5 1129.1,713.9 1135.0,712.8 1140.9,707.5 1146.9,705.6 1152.8,710.0 1158.7,718.0 1164.7,719.0 1170.6,725.9 1176.5,713.5 1182.5,706.5 1188.4,713.9 1194.3,713.5 1200.3,725.2 1206.2,715.8 1212.1,712.8 1218.1,703.1 1224.0,705.8 1229.9,695.9 1235.9,730.1 1241.8,727.7 1247.7,713.5 1253.7,707.9 1259.6,710.0 1265.5,710.0 1271.5,711.1 1277.4,729.4 1283.3,714.1 1289.3,702.8 1295.2,717.2 1301.1,709.3 1307.1,716.2 1313.0,733.8 1318.9,710.0 1324.9,707.9 1330.8,706.5 1336.7,703.1 1342.7,723.8 1348.6,720.8 1354.5,705.2 1360.5,700.3 1366.4,723.6 1372.3,698.2 1378.3,725.9 1384.2,734.6 1390.1,718.3 1396.1,704.5 1402.0,717.2 1407.9,701.0 1413.9,724.5 1419.8,729.6 1425.7,716.2 1431.7,710.7 1437.6,706.5 1443.5,707.9 1449.5,698.9 1455.4,739.7 1461.3,707.9 1467.3,707.9 1473.2,702.4 1479.1,706.5 1485.1,720.0 1491.0,710.0 1496.9,720.0 1502.9,703.1 1508.8,711.4 1514.7,711.4 1520.7,721.8 1526.6,718.3 1532.5,707.9 1538.4,707.5 1544.4,707.5 1550.3,692.3 1556.2,732.4 1562.2,738.4 1568.1,710.7 1574.0,713.5 1580.0,701.0 1585.9,707.0 1591.8,726.6 1597.8,729.4 1603.7,710.0 1609.6,711.7 1615.6,707.9 1621.5,712.8 1627.4,715.5 1633.4,724.5 1639.3,713.5 1645.2,709.3 1651.2,715.5 1657.1,707.9 1660.1,705.8" fill="none" stroke="#b44fb8" stroke-width="1.6" stroke-linejoin="round" /><polyline points="639.6,784.2 642.6,784.2 648.5,791.4 654.4,791.4 660.4,780.1 666.3,715.3 672.2,718.1 678.2,718.1 684.1,726.1 690.0,728.6 696.0,734.1 701.9,718.9 707.8,723.1 713.8,700.5 719.7,718.9 725.6,721.7 731.6,729.2 737.5,710.2 743.4,718.9 749.4,716.7 755.3,735.8 761.2,738.8 767.2,715.3 773.1,702.9 779.0,721.7 785.0,701.9 790.9,712.3 796.8,722.2 802.8,723.1 808.7,716.7 814.6,712.0 820.6,716.7 826.5,718.1 832.4,718.1 838.4,723.1 844.3,708.4 850.2,709.5 856.2,714.4 862.1,700.9 868.0,708.1 874.0,732.3 879.9,720.6 885.8,706.1 891.8,713.0 897.7,713.0 903.6,726.1 909.6,728.9 915.5,711.2 921.4,708.8 927.4,702.3 933.3,708.1 939.2,719.9 945.1,718.9 951.1,733.7 957.0,712.0 962.9,702.3 968.9,725.0 974.8,708.8 980.7,727.2 986.7,720.6 992.6,710.2 998.5,703.7 1004.5,721.3 1010.4,710.2 1016.3,722.2 1022.3,722.7 1028.2,714.4 1034.1,706.1 1040.1,712.3 1046.0,715.3 1051.9,731.0 1057.9,723.3 1063.8,704.7 1069.7,713.7 1075.7,699.1 1081.6,712.3 1087.5,723.6 1093.5,723.1 1099.4,731.0 1105.3,710.9 1111.3,712.6 1117.2,712.0 1123.1,714.4 1129.1,714.8 1135.0,713.7 1140.9,708.4 1146.9,706.5 1152.8,710.9 1158.7,718.9 1164.7,719.9 1170.6,726.8 1176.5,714.4 1182.5,707.4 1188.4,714.8 1194.3,714.4 1200.3,726.1 1206.2,716.7 1212.1,713.7 1218.1,704.0 1224.0,706.7 1229.9,696.8 1235.9,731.0 1241.8,728.6 1247.7,714.4 1253.7,708.8 1259.6,710.9 1265.5,710.9 1271.5,712.0 1277.4,730.3 1283.3,715.0 1289.3,703.7 1295.2,718.1 1301.1,710.2 1307.1,717.1 1313.0,734.7 1318.9,710.9 1324.9,708.8 1330.8,707.4 1336.7,704.0 1342.7,724.7 1348.6,721.7 1354.5,706.1 1360.5,701.2 1366.4,724.5 1372.3,699.1 1378.3,726.8 1384.2,735.5 1390.1,719.2 1396.1,705.4 1402.0,718.1 1407.9,701.9 1413.9,725.4 1419.8,730.5 1425.7,717.1 1431.7,711.6 1437.6,707.4 1443.5,708.8 1449.5,699.8 1455.4,740.6 1461.3,708.8 1467.3,708.8 1473.2,703.3 1479.1,707.4 1485.1,720.9 1491.0,710.9 1496.9,720.9 1502.9,704.0 1508.8,712.3 1514.7,712.3 1520.7,722.7 1526.6,719.2 1532.5,708.8 1538.4,708.4 1544.4,708.4 1550.3,693.2 1556.2,733.3 1562.2,739.3 1568.1,711.6 1574.0,714.4 1580.0,701.9 1585.9,707.9 1591.8,727.5 1597.8,730.3 1603.7,710.9 1609.6,712.6 1615.6,708.8 1621.5,713.7 1627.4,716.4 1633.4,725.4 1639.3,714.4 1645.2,710.2 1651.2,716.4 1657.1,708.8 1660.1,706.7" fill="none" stroke="#1b9fc8" stroke-width="1.9" stroke-linejoin="round" /><path d="M639.60 878.9H1660.08" stroke="#eab88a" stroke-width="1.8"/><polyline points="639.6,936.2 1660.1,936.2" fill="none" stroke="#b44fb8" stroke-width="1.6" stroke-linejoin="round" /><polyline points="639.6,936.2 654.4,936.2 660.4,880.9 1660.1,880.9" fill="none" stroke="#b44fb8" stroke-width="1.7" stroke-linejoin="round" /><polyline points="639.6,1008.0 654.4,1007.8 660.4,1006.0 666.3,1005.0 666.3,1004.6 672.2,1004.6 678.2,1004.2 684.1,1004.2 690.0,1004.7 696.0,1004.5 701.9,1003.7 707.8,1004.6 713.8,1004.4 719.7,1003.6 725.6,1004.5 731.6,1004.5 737.5,1004.3 743.4,1004.2 749.4,1004.8 755.3,1005.0 761.2,1003.5 767.2,1004.7 773.1,1004.2 779.0,1003.8 785.0,1003.8 790.9,1003.7 796.8,1004.9 802.8,1004.7 808.7,1004.8 814.6,1003.8 820.6,1004.2 826.5,1003.5 832.4,1004.2 838.4,1003.7 844.3,1004.0 850.2,1003.5 856.2,1004.8 862.1,1004.9 868.0,1004.9 874.0,1004.1 879.9,1005.0 885.8,1004.0 891.8,1003.9 897.7,1003.7 903.6,1003.9 909.6,1003.9 915.5,1004.3 921.4,1004.1 927.4,1004.8 933.3,1004.4 939.2,1004.9 945.1,1004.6 951.1,1004.6 957.0,1004.6 962.9,1003.9 968.9,1004.9 974.8,1004.2 980.7,1003.9 986.7,1005.0 992.6,1004.5 998.5,1004.3 1004.5,1003.8 1010.4,1003.8 1016.3,1004.2 1022.3,1004.9 1028.2,1004.2 1034.1,1003.8 1040.1,1004.0 1046.0,1003.9 1051.9,1004.4 1057.9,1004.6 1063.8,1004.1 1069.7,1004.1 1075.7,1003.6 1081.6,1005.0 1087.5,1004.3 1093.5,1004.8 1099.4,1003.9 1105.3,1004.1 1111.3,1004.9 1117.2,1004.8 1123.1,1003.5 1129.1,1004.8 1135.0,1004.4 1140.9,1004.1 1146.9,1004.7 1152.8,1005.0 1158.7,1003.7 1164.7,1004.3 1170.6,1004.9 1176.5,1004.5 1182.5,1004.2 1188.4,1003.6 1194.3,1003.8 1200.3,1004.5 1206.2,1003.7 1212.1,1004.5 1218.1,1003.7 1224.0,1004.3 1229.9,1004.1 1235.9,1004.4 1241.8,1004.0 1247.7,1004.9 1253.7,1004.8 1259.6,1003.9 1265.5,1004.9 1271.5,1004.0 1277.4,1004.2 1283.3,1004.1 1289.3,1004.5 1295.2,1003.8 1301.1,1004.0 1307.1,1004.5 1313.0,1004.7 1318.9,1004.3 1324.9,1005.0 1330.8,1004.7 1336.7,1003.8 1342.7,1003.9 1348.6,1004.2 1354.5,1003.8 1360.5,1004.5 1366.4,1003.7 1372.3,1003.8 1378.3,1003.7 1384.2,1003.6 1390.1,1004.8 1396.1,1004.6 1402.0,1004.9 1407.9,1003.8 1413.9,1004.6 1419.8,1004.5 1425.7,1004.1 1431.7,1003.8 1437.6,1003.9 1443.5,1004.9 1449.5,1004.9 1455.4,1004.0 1461.3,1004.7 1467.3,1003.6 1473.2,1004.1 1479.1,1003.8 1485.1,1004.8 1491.0,1004.1 1496.9,1004.7 1502.9,1003.6 1508.8,1004.9 1514.7,1004.6 1520.7,1004.0 1526.6,1004.9 1532.5,1003.9 1538.4,1004.0 1544.4,1003.5 1550.3,1004.9 1556.2,1004.9 1562.2,1003.9 1568.1,1004.9 1574.0,1004.1 1580.0,1004.1 1585.9,1004.9 1591.8,1004.7 1597.8,1004.7 1603.7,1004.4 1609.6,1004.0 1615.6,1004.7 1621.5,1003.8 1627.4,1003.9 1633.4,1003.6 1639.3,1004.0 1645.2,1004.8 1651.2,1003.9 1657.1,1003.6 1660.1,1004.4" fill="none" stroke="#2dcc72" stroke-width="1.8" stroke-linejoin="round" /><polyline points="639.6,995.5 642.6,995.5 648.5,1008.0 654.4,989.8 660.4,1005.4 666.3,1005.6 672.2,1005.6 678.2,1006.3 684.1,1005.7 690.0,1006.0 696.0,1006.0 701.9,1005.5 707.8,1005.6 713.8,1005.7 719.7,1005.4 725.6,1005.6 731.6,1006.0 737.5,1005.7 743.4,1005.8 749.4,1005.5 755.3,1005.6 761.2,1006.2 767.2,1005.8 773.1,1006.3 779.0,1005.6 785.0,1006.3 790.9,1005.9 796.8,1005.9 802.8,1005.5 808.7,1005.9 814.6,1006.0 820.6,1006.2 826.5,1005.4 832.4,1005.8 838.4,1005.7 844.3,1005.7 850.2,1006.2 856.2,1006.1 862.1,1005.5 868.0,1006.0 874.0,1005.7 879.9,1005.8 885.8,1005.9 891.8,1005.8 897.7,1005.4 903.6,1006.2 909.6,1006.2 915.5,1005.6 921.4,1005.6 927.4,1006.3 933.3,1006.1 939.2,1006.2 945.1,1005.9 951.1,1005.4 957.0,1005.8 962.9,1006.0 968.9,1005.4 974.8,1005.5 980.7,1005.7 986.7,1006.1 992.6,1005.6 998.5,1005.7 1004.5,1005.8 1010.4,1005.5 1016.3,1006.2 1022.3,1005.6 1028.2,1006.3 1034.1,1005.5 1040.1,1005.5 1046.0,1005.5 1051.9,1005.6 1057.9,1006.2 1063.8,1005.8 1069.7,1005.9 1075.7,1005.7 1081.6,1005.6 1087.5,1005.5 1093.5,1006.0 1099.4,1005.6 1105.3,1005.6 1111.3,1005.8 1117.2,1006.2 1123.1,1005.4 1129.1,1006.0 1135.0,1005.8 1140.9,1005.4 1146.9,1006.2 1152.8,1006.2 1158.7,1005.6 1164.7,1005.5 1170.6,1006.0 1176.5,1006.0 1182.5,1006.1 1188.4,1005.9 1194.3,1006.1 1200.3,1006.2 1206.2,1005.7 1212.1,1005.6 1218.1,1006.0 1224.0,1005.5 1229.9,1005.9 1235.9,1005.6 1241.8,1005.4 1247.7,1005.8 1253.7,1006.0 1259.6,1005.8 1265.5,1005.6 1271.5,1006.0 1277.4,1005.4 1283.3,1006.0 1289.3,1005.6 1295.2,1006.2 1301.1,1005.4 1307.1,1005.8 1313.0,1005.6 1318.9,1006.1 1324.9,1005.6 1330.8,1005.7 1336.7,1005.6 1342.7,1006.1 1348.6,1006.3 1354.5,1005.6 1360.5,1005.8 1366.4,1006.3 1372.3,1005.8 1378.3,1006.3 1384.2,1005.4 1390.1,1005.8 1396.1,1006.2 1402.0,1006.3 1407.9,1005.7 1413.9,1006.2 1419.8,1005.4 1425.7,1005.7 1431.7,1005.7 1437.6,1005.4 1443.5,1005.7 1449.5,1005.5 1455.4,1005.6 1461.3,1006.1 1467.3,1005.8 1473.2,1005.8 1479.1,1006.2 1485.1,1005.7 1491.0,1005.4 1496.9,1006.1 1502.9,1005.4 1508.8,1005.5 1514.7,1005.6 1520.7,1006.2 1526.6,1005.6 1532.5,1006.0 1538.4,1006.0 1544.4,1005.6 1550.3,1006.1 1556.2,1006.0 1562.2,1005.4 1568.1,1005.8 1574.0,1006.3 1580.0,1005.6 1585.9,1005.8 1591.8,1005.6 1597.8,1006.1 1603.7,1006.1 1609.6,1005.7 1615.6,1005.7 1621.5,1005.5 1627.4,1006.1 1633.4,1005.5 1639.3,1005.9 1645.2,1006.3 1651.2,1006.3 1657.1,1005.5 1660.1,1005.8" fill="none" stroke="#f28a2e" stroke-width="1.7" stroke-linejoin="round" /><polyline points="639.6,950.0 642.6,950.0 648.5,1008.2 654.4,975.0 660.4,939.6 666.3,939.5 672.2,940.4 678.2,939.5 684.1,939.6 687.1,941.6 692.4,939.7 1660.1,939.7" fill="none" stroke="#1b9fc8" stroke-width="1.7" stroke-linejoin="round" /></g><path d="M1660.08 171.0V1029.5" stroke="#8e8e8e" stroke-width="1.2"/><path d="M1170.4 793.5V879.6" stroke="#b0b0b0" stroke-width="1"/></svg>
<div class="b" style="left:622.40px;top:171.00px;width:17.20px;height:858.50px;background:#2e2e2e;"></div>
<div class="b" style="left:622.00px;top:171.00px;width:1.00px;height:858.50px;background:#2a2a2a;"></div>
<div class="b" style="left:364.00px;top:170.50px;width:275.60px;height:1.00px;background:#272727;"></div>
<span class="t" style="left:380.70px;top:174.20px;font-size:14.00px;color:#d4d4d4;transform:scaleX(0.8916);-webkit-text-stroke:0.35px #d4d4d4;">Frame Rate</span>
<div class="b" style="left:385.00px;top:194.30px;width:7.00px;height:7.00px;background:#1ba3c6;border-radius:50%;"></div>
<span class="t" style="left:396.50px;top:192.14px;font-size:11.33px;color:#e4e4e4;transform:scaleX(0.8877);-webkit-text-stroke:0.3px #e4e4e4;">Frame rate Vk 0x7ce1905ae0</span>
<div class="b" style="left:385.00px;top:209.10px;width:7.00px;height:7.00px;background:#f28a2e;border-radius:50%;"></div>
<span class="t" style="left:396.50px;top:206.94px;font-size:11.33px;color:#e4e4e4;transform:scaleX(0.9005);-webkit-text-stroke:0.3px #e4e4e4;">Frame rate Vk 0x7ce190dcf0</span>
<div class="b" style="left:455.90px;top:223.00px;width:91.30px;height:1.30px;background:#747474;"></div>
<div class="b" style="left:455.90px;top:225.30px;width:91.30px;height:1.30px;background:#747474;"></div>
<svg style="left:607.60px;top:175.40px" width="12" height="12" viewBox="-6 -6 12 12"><g fill="#f4f4f4"><rect x="-1.05" y="-5.7" width="2.1" height="3" transform="rotate(0)"/><rect x="-1.05" y="-5.7" width="2.1" height="3" transform="rotate(45)"/><rect x="-1.05" y="-5.7" width="2.1" height="3" transform="rotate(90)"/><rect x="-1.05" y="-5.7" width="2.1" height="3" transform="rotate(135)"/><rect x="-1.05" y="-5.7" width="2.1" height="3" transform="rotate(180)"/><rect x="-1.05" y="-5.7" width="2.1" height="3" transform="rotate(225)"/><rect x="-1.05" y="-5.7" width="2.1" height="3" transform="rotate(270)"/><rect x="-1.05" y="-5.7" width="2.1" height="3" transform="rotate(315)"/></g><circle r="3.1" fill="none" stroke="#f4f4f4" stroke-width="1.9"/></svg>
<svg style="left:624.80px;top:176.00px" width="11" height="11" viewBox="0 0 11 11"><rect x="0.6" y="0.6" width="9.4" height="9.4" fill="#6b6b6b" stroke="#ececec" stroke-width="1.2"/></svg>
<div class="b" style="left:364.00px;top:226.90px;width:275.60px;height:1.00px;background:#272727;"></div>
<span class="t" style="left:380.70px;top:230.60px;font-size:14.00px;color:#d4d4d4;transform:scaleX(0.9408);-webkit-text-stroke:0.35px #d4d4d4;">Device Thermal State</span>
<div class="b" style="left:385.00px;top:250.70px;width:7.00px;height:7.00px;background:#2dbb66;border-radius:50%;"></div>
<span class="t" style="left:396.50px;top:248.54px;font-size:11.33px;color:#e4e4e4;transform:scaleX(0.9948);-webkit-text-stroke:0.3px #e4e4e4;">No throttle</span>
<div class="b" style="left:385.00px;top:265.50px;width:7.00px;height:7.00px;background:#e6e04a;border-radius:50%;"></div>
<span class="t" style="left:396.50px;top:263.33px;font-size:11.33px;color:#e4e4e4;transform:scaleX(1.0103);-webkit-text-stroke:0.3px #e4e4e4;">Light throttle</span>
<div class="b" style="left:385.00px;top:280.30px;width:7.00px;height:7.00px;background:#f28a2e;border-radius:50%;"></div>
<span class="t" style="left:396.50px;top:278.13px;font-size:11.33px;color:#e4e4e4;transform:scaleX(0.9877);-webkit-text-stroke:0.3px #e4e4e4;">Moderate throttle</span>
<div class="b" style="left:385.00px;top:295.10px;width:7.00px;height:7.00px;background:#e8542a;border-radius:50%;"></div>
<span class="t" style="left:396.50px;top:292.94px;font-size:11.33px;color:#e4e4e4;transform:scaleX(0.9731);-webkit-text-stroke:0.3px #e4e4e4;">Severe throttle</span>
<div class="b" style="left:385.00px;top:309.90px;width:7.00px;height:7.00px;background:#c4224a;border-radius:50%;"></div>
<span class="t" style="left:396.50px;top:307.74px;font-size:11.33px;color:#e4e4e4;transform:scaleX(0.9832);-webkit-text-stroke:0.3px #e4e4e4;">Critical+ throttle</span>
<div class="b" style="left:455.90px;top:324.70px;width:91.30px;height:1.30px;background:#747474;"></div>
<div class="b" style="left:455.90px;top:327.00px;width:91.30px;height:1.30px;background:#747474;"></div>
<svg style="left:607.60px;top:231.80px" width="12" height="12" viewBox="-6 -6 12 12"><g fill="#f4f4f4"><rect x="-1.05" y="-5.7" width="2.1" height="3" transform="rotate(0)"/><rect x="-1.05" y="-5.7" width="2.1" height="3" transform="rotate(45)"/><rect x="-1.05" y="-5.7" width="2.1" height="3" transform="rotate(90)"/><rect x="-1.05" y="-5.7" width="2.1" height="3" transform="rotate(135)"/><rect x="-1.05" y="-5.7" width="2.1" height="3" transform="rotate(180)"/><rect x="-1.05" y="-5.7" width="2.1" height="3" transform="rotate(225)"/><rect x="-1.05" y="-5.7" width="2.1" height="3" transform="rotate(270)"/><rect x="-1.05" y="-5.7" width="2.1" height="3" transform="rotate(315)"/></g><circle r="3.1" fill="none" stroke="#f4f4f4" stroke-width="1.9"/></svg>
<svg style="left:624.80px;top:232.40px" width="11" height="11" viewBox="0 0 11 11"><rect x="0.6" y="0.6" width="9.4" height="9.4" fill="#6b6b6b" stroke="#ececec" stroke-width="1.2"/></svg>
<div class="b" style="left:364.00px;top:328.60px;width:275.60px;height:1.00px;background:#272727;"></div>
<span class="t" style="left:380.70px;top:332.30px;font-size:14.00px;color:#d4d4d4;transform:scaleX(0.9140);-webkit-text-stroke:0.35px #d4d4d4;">CPU Activity (Cortex-A510)</span>
<svg style="left:367.8px;top:335.30px" width="9" height="10" viewBox="0 0 9 10"><path d="M0.4 0.6 L8.2 4.9 L0.4 9.2 Z" fill="#f4f4f4"/></svg>
<div class="b" style="left:385.00px;top:352.40px;width:7.00px;height:7.00px;background:#3fd13f;border-radius:50%;"></div>
<span class="t" style="left:396.50px;top:350.24px;font-size:11.33px;color:#e4e4e4;transform:scaleX(0.9660);-webkit-text-stroke:0.3px #e4e4e4;">User activity</span>
<div class="b" style="left:385.00px;top:367.20px;width:7.00px;height:7.00px;background:#e8403c;border-radius:50%;"></div>
<span class="t" style="left:396.50px;top:365.04px;font-size:11.33px;color:#e4e4e4;transform:scaleX(0.9583);-webkit-text-stroke:0.3px #e4e4e4;">System activity</span>
<div class="b" style="left:455.90px;top:384.90px;width:91.30px;height:1.30px;background:#747474;"></div>
<div class="b" style="left:455.90px;top:387.20px;width:91.30px;height:1.30px;background:#747474;"></div>
<svg style="left:607.60px;top:333.50px" width="12" height="12" viewBox="-6 -6 12 12"><g fill="#f4f4f4"><rect x="-1.05" y="-5.7" width="2.1" height="3" transform="rotate(0)"/><rect x="-1.05" y="-5.7" width="2.1" height="3" transform="rotate(45)"/><rect x="-1.05" y="-5.7" width="2.1" height="3" transform="rotate(90)"/><rect x="-1.05" y="-5.7" width="2.1" height="3" transform="rotate(135)"/><rect x="-1.05" y="-5.7" width="2.1" height="3" transform="rotate(180)"/><rect x="-1.05" y="-5.7" width="2.1" height="3" transform="rotate(225)"/><rect x="-1.05" y="-5.7" width="2.1" height="3" transform="rotate(270)"/><rect x="-1.05" y="-5.7" width="2.1" height="3" transform="rotate(315)"/></g><circle r="3.1" fill="none" stroke="#f4f4f4" stroke-width="1.9"/></svg>
<svg style="left:624.80px;top:334.10px" width="11" height="11" viewBox="0 0 11 11"><rect x="0.6" y="0.6" width="9.4" height="9.4" fill="#2450b4" stroke="#ececec" stroke-width="1.2"/><rect x="1.2" y="1.2" width="4.2" height="4.2" fill="#2456c0"/><rect x="5.4" y="1.2" width="4" height="4.2" fill="#2f9a86"/><rect x="1.2" y="5.4" width="4.2" height="4" fill="#8a2fa0"/><rect x="5.4" y="5.4" width="4" height="4" fill="#d07a28"/></svg>
<div class="b" style="left:364.00px;top:388.80px;width:275.60px;height:1.00px;background:#272727;"></div>
<span class="t" style="left:380.70px;top:392.50px;font-size:14.00px;color:#d4d4d4;transform:scaleX(0.9080);-webkit-text-stroke:0.35px #d4d4d4;">CPU Activity (Cortex-A715)</span>
<svg style="left:367.8px;top:395.50px" width="9" height="10" viewBox="0 0 9 10"><path d="M0.4 0.6 L8.2 4.9 L0.4 9.2 Z" fill="#f4f4f4"/></svg>
<div class="b" style="left:385.00px;top:412.60px;width:7.00px;height:7.00px;background:#3fd13f;border-radius:50%;"></div>
<span class="t" style="left:396.50px;top:410.44px;font-size:11.33px;color:#e4e4e4;transform:scaleX(0.9660);-webkit-text-stroke:0.3px #e4e4e4;">User activity</span>
<div class="b" style="left:385.00px;top:427.40px;width:7.00px;height:7.00px;background:#e8403c;border-radius:50%;"></div>
<span class="t" style="left:396.50px;top:425.24px;font-size:11.33px;color:#e4e4e4;transform:scaleX(0.9583);-webkit-text-stroke:0.3px #e4e4e4;">System activity</span>
<div class="b" style="left:455.90px;top:445.20px;width:91.30px;height:1.30px;background:#747474;"></div>
<div class="b" style="left:455.90px;top:447.50px;width:91.30px;height:1.30px;background:#747474;"></div>
<svg style="left:607.60px;top:393.70px" width="12" height="12" viewBox="-6 -6 12 12"><g fill="#f4f4f4"><rect x="-1.05" y="-5.7" width="2.1" height="3" transform="rotate(0)"/><rect x="-1.05" y="-5.7" width="2.1" height="3" transform="rotate(45)"/><rect x="-1.05" y="-5.7" width="2.1" height="3" transform="rotate(90)"/><rect x="-1.05" y="-5.7" width="2.1" height="3" transform="rotate(135)"/><rect x="-1.05" y="-5.7" width="2.1" height="3" transform="rotate(180)"/><rect x="-1.05" y="-5.7" width="2.1" height="3" transform="rotate(225)"/><rect x="-1.05" y="-5.7" width="2.1" height="3" transform="rotate(270)"/><rect x="-1.05" y="-5.7" width="2.1" height="3" transform="rotate(315)"/></g><circle r="3.1" fill="none" stroke="#f4f4f4" stroke-width="1.9"/></svg>
<svg style="left:624.80px;top:394.30px" width="11" height="11" viewBox="0 0 11 11"><rect x="0.6" y="0.6" width="9.4" height="9.4" fill="#2450b4" stroke="#ececec" stroke-width="1.2"/><rect x="1.2" y="1.2" width="4.2" height="4.2" fill="#2456c0"/><rect x="5.4" y="1.2" width="4" height="4.2" fill="#2f9a86"/><rect x="1.2" y="5.4" width="4.2" height="4" fill="#8a2fa0"/><rect x="5.4" y="5.4" width="4" height="4" fill="#d07a28"/></svg>
<div class="b" style="left:364.00px;top:449.10px;width:275.60px;height:1.00px;background:#272727;"></div>
<span class="t" style="left:380.70px;top:452.80px;font-size:14.00px;color:#d4d4d4;transform:scaleX(0.9233);-webkit-text-stroke:0.35px #d4d4d4;">CPU Activity (Cortex-X3)</span>
<div class="b" style="left:385.00px;top:472.90px;width:7.00px;height:7.00px;background:#3fd13f;border-radius:50%;"></div>
<span class="t" style="left:396.50px;top:470.74px;font-size:11.33px;color:#e4e4e4;transform:scaleX(0.9660);-webkit-text-stroke:0.3px #e4e4e4;">User activity</span>
<div class="b" style="left:385.00px;top:487.70px;width:7.00px;height:7.00px;background:#e8403c;border-radius:50%;"></div>
<span class="t" style="left:396.50px;top:485.54px;font-size:11.33px;color:#e4e4e4;transform:scaleX(0.9583);-webkit-text-stroke:0.3px #e4e4e4;">System activity</span>
<div class="b" style="left:455.90px;top:505.40px;width:91.30px;height:1.30px;background:#747474;"></div>
<div class="b" style="left:455.90px;top:507.70px;width:91.30px;height:1.30px;background:#747474;"></div>
<svg style="left:607.60px;top:454.00px" width="12" height="12" viewBox="-6 -6 12 12"><g fill="#f4f4f4"><rect x="-1.05" y="-5.7" width="2.1" height="3" transform="rotate(0)"/><rect x="-1.05" y="-5.7" width="2.1" height="3" transform="rotate(45)"/><rect x="-1.05" y="-5.7" width="2.1" height="3" transform="rotate(90)"/><rect x="-1.05" y="-5.7" width="2.1" height="3" transform="rotate(135)"/><rect x="-1.05" y="-5.7" width="2.1" height="3" transform="rotate(180)"/><rect x="-1.05" y="-5.7" width="2.1" height="3" transform="rotate(225)"/><rect x="-1.05" y="-5.7" width="2.1" height="3" transform="rotate(270)"/><rect x="-1.05" y="-5.7" width="2.1" height="3" transform="rotate(315)"/></g><circle r="3.1" fill="none" stroke="#f4f4f4" stroke-width="1.9"/></svg>
<svg style="left:624.80px;top:454.60px" width="11" height="11" viewBox="0 0 11 11"><rect x="0.6" y="0.6" width="9.4" height="9.4" fill="#2450b4" stroke="#ececec" stroke-width="1.2"/></svg>
<div class="b" style="left:364.00px;top:509.30px;width:275.60px;height:1.00px;background:#272727;"></div>
<span class="t" style="left:380.70px;top:513.00px;font-size:14.00px;color:#d4d4d4;transform:scaleX(0.8705);-webkit-text-stroke:0.35px #d4d4d4;">CPU Cycles (Cortex-A510)</span>
<svg style="left:367.8px;top:516.00px" width="9" height="10" viewBox="0 0 9 10"><path d="M0.4 0.6 L8.2 4.9 L0.4 9.2 Z" fill="#f4f4f4"/></svg>
<div class="b" style="left:385.00px;top:533.10px;width:7.00px;height:7.00px;background:#43bf48;border-radius:50%;"></div>
<span class="t" style="left:396.50px;top:530.94px;font-size:11.33px;color:#e4e4e4;transform:scaleX(0.8383);-webkit-text-stroke:0.3px #e4e4e4;">Cycles</span>
<div class="b" style="left:455.90px;top:565.60px;width:91.30px;height:1.30px;background:#747474;"></div>
<div class="b" style="left:455.90px;top:567.90px;width:91.30px;height:1.30px;background:#747474;"></div>
<svg style="left:607.60px;top:514.20px" width="12" height="12" viewBox="-6 -6 12 12"><g fill="#f4f4f4"><rect x="-1.05" y="-5.7" width="2.1" height="3" transform="rotate(0)"/><rect x="-1.05" y="-5.7" width="2.1" height="3" transform="rotate(45)"/><rect x="-1.05" y="-5.7" width="2.1" height="3" transform="rotate(90)"/><rect x="-1.05" y="-5.7" width="2.1" height="3" transform="rotate(135)"/><rect x="-1.05" y="-5.7" width="2.1" height="3" transform="rotate(180)"/><rect x="-1.05" y="-5.7" width="2.1" height="3" transform="rotate(225)"/><rect x="-1.05" y="-5.7" width="2.1" height="3" transform="rotate(270)"/><rect x="-1.05" y="-5.7" width="2.1" height="3" transform="rotate(315)"/></g><circle r="3.1" fill="none" stroke="#f4f4f4" stroke-width="1.9"/></svg>
<svg style="left:624.80px;top:514.80px" width="11" height="11" viewBox="0 0 11 11"><rect x="0.6" y="0.6" width="9.4" height="9.4" fill="#2450b4" stroke="#ececec" stroke-width="1.2"/><rect x="1.2" y="1.2" width="4.2" height="4.2" fill="#2456c0"/><rect x="5.4" y="1.2" width="4" height="4.2" fill="#2f9a86"/><rect x="1.2" y="5.4" width="4.2" height="4" fill="#8a2fa0"/><rect x="5.4" y="5.4" width="4" height="4" fill="#d07a28"/></svg>
<div class="b" style="left:364.00px;top:569.50px;width:275.60px;height:1.00px;background:#272727;"></div>
<span class="t" style="left:380.70px;top:573.20px;font-size:14.00px;color:#d4d4d4;transform:scaleX(0.8645);-webkit-text-stroke:0.35px #d4d4d4;">CPU Cycles (Cortex-A715)</span>
<svg style="left:367.8px;top:576.20px" width="9" height="10" viewBox="0 0 9 10"><path d="M0.4 0.6 L8.2 4.9 L0.4 9.2 Z" fill="#f4f4f4"/></svg>
<div class="b" style="left:385.00px;top:593.30px;width:7.00px;height:7.00px;background:#43bf48;border-radius:50%;"></div>
<span class="t" style="left:396.50px;top:591.13px;font-size:11.33px;color:#e4e4e4;transform:scaleX(0.8383);-webkit-text-stroke:0.3px #e4e4e4;">Cycles</span>
<div class="b" style="left:455.90px;top:625.90px;width:91.30px;height:1.30px;background:#747474;"></div>
<div class="b" style="left:455.90px;top:628.20px;width:91.30px;height:1.30px;background:#747474;"></div>
<svg style="left:607.60px;top:574.40px" width="12" height="12" viewBox="-6 -6 12 12"><g fill="#f4f4f4"><rect x="-1.05" y="-5.7" width="2.1" height="3" transform="rotate(0)"/><rect x="-1.05" y="-5.7" width="2.1" height="3" transform="rotate(45)"/><rect x="-1.05" y="-5.7" width="2.1" height="3" transform="rotate(90)"/><rect x="-1.05" y="-5.7" width="2.1" height="3" transform="rotate(135)"/><rect x="-1.05" y="-5.7" width="2.1" height="3" transform="rotate(180)"/><rect x="-1.05" y="-5.7" width="2.1" height="3" transform="rotate(225)"/><rect x="-1.05" y="-5.7" width="2.1" height="3" transform="rotate(270)"/><rect x="-1.05" y="-5.7" width="2.1" height="3" transform="rotate(315)"/></g><circle r="3.1" fill="none" stroke="#f4f4f4" stroke-width="1.9"/></svg>
<svg style="left:624.80px;top:575.00px" width="11" height="11" viewBox="0 0 11 11"><rect x="0.6" y="0.6" width="9.4" height="9.4" fill="#2450b4" stroke="#ececec" stroke-width="1.2"/><rect x="1.2" y="1.2" width="4.2" height="4.2" fill="#2456c0"/><rect x="5.4" y="1.2" width="4" height="4.2" fill="#2f9a86"/><rect x="1.2" y="5.4" width="4.2" height="4" fill="#8a2fa0"/><rect x="5.4" y="5.4" width="4" height="4" fill="#d07a28"/></svg>
<div class="b" style="left:364.00px;top:629.80px;width:275.60px;height:1.00px;background:#272727;"></div>
<span class="t" style="left:380.70px;top:633.50px;font-size:14.00px;color:#d4d4d4;transform:scaleX(0.8741);-webkit-text-stroke:0.35px #d4d4d4;">CPU Cycles (Cortex-X3)</span>
<div class="b" style="left:385.00px;top:653.60px;width:7.00px;height:7.00px;background:#43bf48;border-radius:50%;"></div>
<span class="t" style="left:396.50px;top:651.43px;font-size:11.33px;color:#e4e4e4;transform:scaleX(0.8383);-webkit-text-stroke:0.3px #e4e4e4;">Cycles</span>
<div class="b" style="left:455.90px;top:686.10px;width:91.30px;height:1.30px;background:#747474;"></div>
<div class="b" style="left:455.90px;top:688.40px;width:91.30px;height:1.30px;background:#747474;"></div>
<svg style="left:607.60px;top:634.70px" width="12" height="12" viewBox="-6 -6 12 12"><g fill="#f4f4f4"><rect x="-1.05" y="-5.7" width="2.1" height="3" transform="rotate(0)"/><rect x="-1.05" y="-5.7" width="2.1" height="3" transform="rotate(45)"/><rect x="-1.05" y="-5.7" width="2.1" height="3" transform="rotate(90)"/><rect x="-1.05" y="-5.7" width="2.1" height="3" transform="rotate(135)"/><rect x="-1.05" y="-5.7" width="2.1" height="3" transform="rotate(180)"/><rect x="-1.05" y="-5.7" width="2.1" height="3" transform="rotate(225)"/><rect x="-1.05" y="-5.7" width="2.1" height="3" transform="rotate(270)"/><rect x="-1.05" y="-5.7" width="2.1" height="3" transform="rotate(315)"/></g><circle r="3.1" fill="none" stroke="#f4f4f4" stroke-width="1.9"/></svg>
<svg style="left:624.80px;top:635.30px" width="11" height="11" viewBox="0 0 11 11"><rect x="0.6" y="0.6" width="9.4" height="9.4" fill="#2450b4" stroke="#ececec" stroke-width="1.2"/></svg>
<div class="b" style="left:364.00px;top:690.00px;width:275.60px;height:1.00px;background:#272727;"></div>
<span class="t" style="left:380.70px;top:693.70px;font-size:14.00px;color:#d4d4d4;transform:scaleX(0.8882);-webkit-text-stroke:0.35px #d4d4d4;">Mali GPU Usage</span>
<div class="b" style="left:385.00px;top:713.80px;width:7.00px;height:7.00px;background:#b44fb8;border-radius:50%;"></div>
<span class="t" style="left:396.50px;top:711.63px;font-size:11.33px;color:#e4e4e4;transform:scaleX(0.8901);-webkit-text-stroke:0.3px #e4e4e4;">GPU active</span>
<div class="b" style="left:385.00px;top:728.60px;width:7.00px;height:7.00px;background:#2dcc72;border-radius:50%;"></div>
<span class="t" style="left:396.50px;top:726.43px;font-size:11.33px;color:#e4e4e4;transform:scaleX(0.9350);-webkit-text-stroke:0.3px #e4e4e4;">Compute queue active</span>
<div class="b" style="left:385.00px;top:743.40px;width:7.00px;height:7.00px;background:#f28a2e;border-radius:50%;"></div>
<span class="t" style="left:396.50px;top:741.24px;font-size:11.33px;color:#e4e4e4;transform:scaleX(0.9465);-webkit-text-stroke:0.3px #e4e4e4;">Vertex queue active</span>
<div class="b" style="left:385.00px;top:758.20px;width:7.00px;height:7.00px;background:#1b9fc8;border-radius:50%;"></div>
<span class="t" style="left:396.50px;top:756.03px;font-size:11.33px;color:#e4e4e4;transform:scaleX(0.9406);-webkit-text-stroke:0.3px #e4e4e4;">Fragment queue active</span>
<div class="b" style="left:385.00px;top:773.00px;width:7.00px;height:7.00px;background:#e8184e;border-radius:50%;"></div>
<span class="t" style="left:396.50px;top:770.84px;font-size:11.33px;color:#e4e4e4;transform:scaleX(0.9430);-webkit-text-stroke:0.3px #e4e4e4;">GPU interrupt active</span>
<div class="b" style="left:455.90px;top:787.80px;width:91.30px;height:1.30px;background:#747474;"></div>
<div class="b" style="left:455.90px;top:790.10px;width:91.30px;height:1.30px;background:#747474;"></div>
<svg style="left:607.60px;top:694.90px" width="12" height="12" viewBox="-6 -6 12 12"><g fill="#f4f4f4"><rect x="-1.05" y="-5.7" width="2.1" height="3" transform="rotate(0)"/><rect x="-1.05" y="-5.7" width="2.1" height="3" transform="rotate(45)"/><rect x="-1.05" y="-5.7" width="2.1" height="3" transform="rotate(90)"/><rect x="-1.05" y="-5.7" width="2.1" height="3" transform="rotate(135)"/><rect x="-1.05" y="-5.7" width="2.1" height="3" transform="rotate(180)"/><rect x="-1.05" y="-5.7" width="2.1" height="3" transform="rotate(225)"/><rect x="-1.05" y="-5.7" width="2.1" height="3" transform="rotate(270)"/><rect x="-1.05" y="-5.7" width="2.1" height="3" transform="rotate(315)"/></g><circle r="3.1" fill="none" stroke="#f4f4f4" stroke-width="1.9"/></svg>
<svg style="left:624.80px;top:695.50px" width="11" height="11" viewBox="0 0 11 11"><rect x="0.6" y="0.6" width="9.4" height="9.4" fill="#2450b4" stroke="#ececec" stroke-width="1.2"/></svg>
<div class="b" style="left:364.00px;top:791.70px;width:275.60px;height:1.00px;background:#272727;"></div>
<span class="t" style="left:380.70px;top:795.40px;font-size:14.00px;color:#d4d4d4;transform:scaleX(0.9619);-webkit-text-stroke:0.35px #d4d4d4;">Workloads / Frame</span>
<div class="b" style="left:385.00px;top:815.50px;width:7.00px;height:7.00px;background:#f28a2e;border-radius:50%;"></div>
<span class="t" style="left:396.50px;top:813.34px;font-size:11.33px;color:#e4e4e4;transform:scaleX(0.8778);-webkit-text-stroke:0.3px #e4e4e4;">Trace rays Vk 0x7ce1905ae0</span>
<div class="b" style="left:385.00px;top:830.30px;width:7.00px;height:7.00px;background:#a6ecc0;border-radius:50%;"></div>
<span class="t" style="left:396.50px;top:828.13px;font-size:11.33px;color:#e4e4e4;transform:scaleX(0.9076);-webkit-text-stroke:0.3px #e4e4e4;">Compute dispatches Vk 0x7ce190dcf0</span>
<div class="b" style="left:385.00px;top:845.10px;width:7.00px;height:7.00px;background:#70d4f4;border-radius:50%;"></div>
<span class="t" style="left:396.50px;top:842.94px;font-size:11.33px;color:#e4e4e4;transform:scaleX(0.8901);-webkit-text-stroke:0.3px #e4e4e4;">Render passes Vk 0x7ce190dcf0</span>
<div class="b" style="left:385.00px;top:859.90px;width:7.00px;height:7.00px;background:#f8c498;border-radius:50%;"></div>
<span class="t" style="left:396.50px;top:857.74px;font-size:11.33px;color:#e4e4e4;transform:scaleX(0.8892);-webkit-text-stroke:0.3px #e4e4e4;">Trace rays Vk 0x7ce190dcf0</span>
<div class="b" style="left:455.90px;top:874.80px;width:91.30px;height:1.30px;background:#747474;"></div>
<div class="b" style="left:455.90px;top:877.10px;width:91.30px;height:1.30px;background:#747474;"></div>
<svg style="left:607.60px;top:796.60px" width="12" height="12" viewBox="-6 -6 12 12"><g fill="#f4f4f4"><rect x="-1.05" y="-5.7" width="2.1" height="3" transform="rotate(0)"/><rect x="-1.05" y="-5.7" width="2.1" height="3" transform="rotate(45)"/><rect x="-1.05" y="-5.7" width="2.1" height="3" transform="rotate(90)"/><rect x="-1.05" y="-5.7" width="2.1" height="3" transform="rotate(135)"/><rect x="-1.05" y="-5.7" width="2.1" height="3" transform="rotate(180)"/><rect x="-1.05" y="-5.7" width="2.1" height="3" transform="rotate(225)"/><rect x="-1.05" y="-5.7" width="2.1" height="3" transform="rotate(270)"/><rect x="-1.05" y="-5.7" width="2.1" height="3" transform="rotate(315)"/></g><circle r="3.1" fill="none" stroke="#f4f4f4" stroke-width="1.9"/></svg>
<svg style="left:624.80px;top:797.20px" width="11" height="11" viewBox="0 0 11 11"><rect x="0.6" y="0.6" width="9.4" height="9.4" fill="#6b6b6b" stroke="#ececec" stroke-width="1.2"/></svg>
<div class="b" style="left:364.00px;top:878.70px;width:275.60px;height:1.00px;background:#272727;"></div>
<span class="t" style="left:380.70px;top:882.40px;font-size:14.00px;color:#d4d4d4;transform:scaleX(0.9391);-webkit-text-stroke:0.35px #d4d4d4;">Draw Calls / Frame</span>
<div class="b" style="left:385.00px;top:902.50px;width:7.00px;height:7.00px;background:#b44fb8;border-radius:50%;"></div>
<span class="t" style="left:396.50px;top:900.34px;font-size:11.33px;color:#e4e4e4;transform:scaleX(0.8897);-webkit-text-stroke:0.3px #e4e4e4;">Draw calls Vk 0x7ce1905ae0</span>
<div class="b" style="left:385.00px;top:917.30px;width:7.00px;height:7.00px;background:#b44fb8;border-radius:50%;"></div>
<span class="t" style="left:396.50px;top:915.13px;font-size:11.33px;color:#e4e4e4;transform:scaleX(0.9015);-webkit-text-stroke:0.3px #e4e4e4;">Draw calls Vk 0x7ce190dcf0</span>
<div class="b" style="left:455.90px;top:932.30px;width:91.30px;height:1.30px;background:#747474;"></div>
<div class="b" style="left:455.90px;top:934.60px;width:91.30px;height:1.30px;background:#747474;"></div>
<svg style="left:607.60px;top:883.60px" width="12" height="12" viewBox="-6 -6 12 12"><g fill="#f4f4f4"><rect x="-1.05" y="-5.7" width="2.1" height="3" transform="rotate(0)"/><rect x="-1.05" y="-5.7" width="2.1" height="3" transform="rotate(45)"/><rect x="-1.05" y="-5.7" width="2.1" height="3" transform="rotate(90)"/><rect x="-1.05" y="-5.7" width="2.1" height="3" transform="rotate(135)"/><rect x="-1.05" y="-5.7" width="2.1" height="3" transform="rotate(180)"/><rect x="-1.05" y="-5.7" width="2.1" height="3" transform="rotate(225)"/><rect x="-1.05" y="-5.7" width="2.1" height="3" transform="rotate(270)"/><rect x="-1.05" y="-5.7" width="2.1" height="3" transform="rotate(315)"/></g><circle r="3.1" fill="none" stroke="#f4f4f4" stroke-width="1.9"/></svg>
<svg style="left:624.80px;top:884.20px" width="11" height="11" viewBox="0 0 11 11"><rect x="0.6" y="0.6" width="9.4" height="9.4" fill="#6b6b6b" stroke="#ececec" stroke-width="1.2"/></svg>
<div class="b" style="left:364.00px;top:936.20px;width:275.60px;height:1.00px;background:#272727;"></div>
<span class="t" style="left:380.70px;top:939.90px;font-size:14.00px;color:#d4d4d4;transform:scaleX(0.9608);-webkit-text-stroke:0.35px #d4d4d4;">Mali GPU Utilization</span>
<div class="b" style="left:385.00px;top:960.00px;width:7.00px;height:7.00px;background:#2dcc72;border-radius:50%;"></div>
<span class="t" style="left:396.50px;top:957.84px;font-size:11.33px;color:#e4e4e4;transform:scaleX(0.9640);-webkit-text-stroke:0.3px #e4e4e4;">Compute queue utilization</span>
<div class="b" style="left:385.00px;top:974.80px;width:7.00px;height:7.00px;background:#f28a2e;border-radius:50%;"></div>
<span class="t" style="left:396.50px;top:972.63px;font-size:11.33px;color:#e4e4e4;transform:scaleX(0.9773);-webkit-text-stroke:0.3px #e4e4e4;">Vertex queue utilization</span>
<div class="b" style="left:385.00px;top:989.60px;width:7.00px;height:7.00px;background:#1b9fc8;border-radius:50%;"></div>
<span class="t" style="left:396.50px;top:987.44px;font-size:11.33px;color:#e4e4e4;transform:scaleX(0.9684);-webkit-text-stroke:0.3px #e4e4e4;">Fragment queue utilization</span>
<div class="b" style="left:455.90px;top:1004.70px;width:91.30px;height:1.30px;background:#747474;"></div>
<div class="b" style="left:455.90px;top:1007.00px;width:91.30px;height:1.30px;background:#747474;"></div>
<svg style="left:607.60px;top:941.10px" width="12" height="12" viewBox="-6 -6 12 12"><g fill="#f4f4f4"><rect x="-1.05" y="-5.7" width="2.1" height="3" transform="rotate(0)"/><rect x="-1.05" y="-5.7" width="2.1" height="3" transform="rotate(45)"/><rect x="-1.05" y="-5.7" width="2.1" height="3" transform="rotate(90)"/><rect x="-1.05" y="-5.7" width="2.1" height="3" transform="rotate(135)"/><rect x="-1.05" y="-5.7" width="2.1" height="3" transform="rotate(180)"/><rect x="-1.05" y="-5.7" width="2.1" height="3" transform="rotate(225)"/><rect x="-1.05" y="-5.7" width="2.1" height="3" transform="rotate(270)"/><rect x="-1.05" y="-5.7" width="2.1" height="3" transform="rotate(315)"/></g><circle r="3.1" fill="none" stroke="#f4f4f4" stroke-width="1.9"/></svg>
<svg style="left:624.80px;top:941.70px" width="11" height="11" viewBox="0 0 11 11"><rect x="0.6" y="0.6" width="9.4" height="9.4" fill="#2450b4" stroke="#ececec" stroke-width="1.2"/></svg>
<div class="b" style="left:364.00px;top:1008.60px;width:275.60px;height:1.00px;background:#272727;"></div>
<span class="t" style="left:380.70px;top:1012.30px;font-size:14.00px;color:#d4d4d4;transform:scaleX(0.9512);-webkit-text-stroke:0.35px #d4d4d4;">Mali Memory Bandwidth Usage</span>
<svg style="left:607.60px;top:1013.50px" width="12" height="12" viewBox="-6 -6 12 12"><g fill="#f4f4f4"><rect x="-1.05" y="-5.7" width="2.1" height="3" transform="rotate(0)"/><rect x="-1.05" y="-5.7" width="2.1" height="3" transform="rotate(45)"/><rect x="-1.05" y="-5.7" width="2.1" height="3" transform="rotate(90)"/><rect x="-1.05" y="-5.7" width="2.1" height="3" transform="rotate(135)"/><rect x="-1.05" y="-5.7" width="2.1" height="3" transform="rotate(180)"/><rect x="-1.05" y="-5.7" width="2.1" height="3" transform="rotate(225)"/><rect x="-1.05" y="-5.7" width="2.1" height="3" transform="rotate(270)"/><rect x="-1.05" y="-5.7" width="2.1" height="3" transform="rotate(315)"/></g><circle r="3.1" fill="none" stroke="#f4f4f4" stroke-width="1.9"/></svg>
<svg style="left:624.80px;top:1014.10px" width="11" height="11" viewBox="0 0 11 11"><rect x="0.6" y="0.6" width="9.4" height="9.4" fill="#2450b4" stroke="#ececec" stroke-width="1.2"/></svg>
<div class="b" style="left:364.00px;top:1029.00px;width:275.60px;height:1.00px;background:#272727;"></div>
<div class="b" style="left:643.40px;top:176.00px;width:38.30px;height:16.00px;background:rgba(56,56,56,.72);border-radius:4px;"></div>
<span class="t" style="left:647.40px;top:178.70px;font-size:11.00px;color:#ececec;transform:scaleX(0.8314);text-shadow:0 0 0.5px rgba(236,236,236,.8);">70 FPS</span>
<div class="b" style="left:643.40px;top:232.40px;width:35.80px;height:16.00px;background:rgba(56,56,56,.72);border-radius:4px;"></div>
<span class="t" style="left:647.40px;top:235.10px;font-size:11.00px;color:#ececec;transform:scaleX(0.8977);text-shadow:0 0 0.5px rgba(236,236,236,.8);">100 %</span>
<div class="b" style="left:643.40px;top:334.10px;width:32.60px;height:16.00px;background:rgba(56,56,56,.72);border-radius:4px;"></div>
<span class="t" style="left:647.40px;top:336.80px;font-size:11.00px;color:#ececec;transform:scaleX(0.8815);text-shadow:0 0 0.5px rgba(236,236,236,.8);">100%</span>
<div class="b" style="left:643.40px;top:394.30px;width:32.60px;height:16.00px;background:rgba(56,56,56,.72);border-radius:4px;"></div>
<span class="t" style="left:647.40px;top:397.00px;font-size:11.00px;color:#ececec;transform:scaleX(0.8815);text-shadow:0 0 0.5px rgba(236,236,236,.8);">100%</span>
<div class="b" style="left:643.40px;top:454.60px;width:32.60px;height:16.00px;background:rgba(56,56,56,.72);border-radius:4px;"></div>
<span class="t" style="left:647.40px;top:457.30px;font-size:11.00px;color:#ececec;transform:scaleX(0.8815);text-shadow:0 0 0.5px rgba(236,236,236,.8);">100%</span>
<div class="b" style="left:643.40px;top:514.80px;width:74.40px;height:16.00px;background:rgba(56,56,56,.72);border-radius:4px;"></div>
<span class="t" style="left:647.40px;top:517.50px;font-size:11.00px;color:#ececec;transform:scaleX(0.9391);text-shadow:0 0 0.5px rgba(236,236,236,.8);">6 mega-cycles</span>
<div class="b" style="left:643.40px;top:575.00px;width:73.60px;height:16.00px;background:rgba(56,56,56,.72);border-radius:4px;"></div>
<span class="t" style="left:647.40px;top:577.70px;font-size:11.00px;color:#ececec;transform:scaleX(0.9279);text-shadow:0 0 0.5px rgba(236,236,236,.8);">7 mega-cycles</span>
<div class="b" style="left:643.40px;top:635.30px;width:79.80px;height:16.00px;background:rgba(56,56,56,.72);border-radius:4px;"></div>
<span class="t" style="left:647.40px;top:638.00px;font-size:11.00px;color:#ececec;transform:scaleX(0.9346);text-shadow:0 0 0.5px rgba(236,236,236,.8);">30 mega-cycles</span>
<div class="b" style="left:643.40px;top:695.50px;width:79.40px;height:16.00px;background:rgba(56,56,56,.72);border-radius:4px;"></div>
<span class="t" style="left:647.40px;top:698.20px;font-size:11.00px;color:#ececec;transform:scaleX(0.9295);text-shadow:0 0 0.5px rgba(236,236,236,.8);">10 mega-cycles</span>
<div class="b" style="left:643.40px;top:797.20px;width:13.30px;height:16.00px;background:rgba(56,56,56,.72);border-radius:4px;"></div>
<span class="t" style="left:647.40px;top:799.90px;font-size:11.00px;color:#ececec;transform:scaleX(0.8990);text-shadow:0 0 0.5px rgba(236,236,236,.8);">0</span>
<div class="b" style="left:643.40px;top:884.20px;width:43.80px;height:16.00px;background:rgba(56,56,56,.72);border-radius:4px;"></div>
<span class="t" style="left:647.40px;top:886.90px;font-size:11.00px;color:#ececec;transform:scaleX(0.9346);text-shadow:0 0 0.5px rgba(236,236,236,.8);">3 draws</span>
<div class="b" style="left:643.40px;top:941.70px;width:35.80px;height:16.00px;background:rgba(56,56,56,.72);border-radius:4px;"></div>
<span class="t" style="left:647.40px;top:944.40px;font-size:11.00px;color:#ececec;transform:scaleX(0.8977);text-shadow:0 0 0.5px rgba(236,236,236,.8);">100 %</span>
<div class="b" style="left:643.40px;top:1014.10px;width:42.20px;height:15.40px;background:rgba(56,56,56,.72);border-radius:4px;"></div>
<span class="t" style="left:647.40px;top:1016.80px;font-size:11.00px;color:#ececec;transform:scaleX(0.9700);text-shadow:0 0 0.5px rgba(236,236,236,.8);">0 bytes</span>
<div class="b" style="left:1175.20px;top:809.30px;width:79.70px;height:55.00px;background:#d6d6d6;border-radius:3.5px;"></div>
<div class="b" style="left:1179.30px;top:813.70px;width:8.00px;height:8.00px;background:#f28a2e;border-radius:50%;box-shadow:inset 0 0 0 1px #555;"></div>
<span class="t" style="left:1220.50px;top:812.50px;font-size:11.00px;color:#565656;transform:scaleX(0.9782);text-shadow:0 0 0.5px rgba(86,86,86,.9);">0 calls</span>
<div class="b" style="left:1179.30px;top:826.50px;width:8.00px;height:8.00px;background:#a6ecc0;border-radius:50%;box-shadow:inset 0 0 0 1px #555;"></div>
<span class="t" style="left:1191.00px;top:825.30px;font-size:11.00px;color:#565656;transform:scaleX(0.9715);text-shadow:0 0 0.5px rgba(86,86,86,.9);">0 dispatches</span>
<div class="b" style="left:1179.30px;top:839.30px;width:8.00px;height:8.00px;background:#70d4f4;border-radius:50%;box-shadow:inset 0 0 0 1px #555;"></div>
<span class="t" style="left:1209.80px;top:838.10px;font-size:11.00px;color:#565656;transform:scaleX(0.9358);text-shadow:0 0 0.5px rgba(86,86,86,.9);">0 passes</span>
<div class="b" style="left:1179.30px;top:852.10px;width:8.00px;height:8.00px;background:#f8c498;border-radius:50%;box-shadow:inset 0 0 0 1px #555;"></div>
<span class="t" style="left:1220.50px;top:850.90px;font-size:11.00px;color:#565656;transform:scaleX(0.9782);text-shadow:0 0 0.5px rgba(86,86,86,.9);">0 calls</span>
<div class="b" style="left:2511.50px;top:171.00px;width:16.00px;height:858.50px;background:#5b5b5b;"></div>
<div class="b" style="left:2511.50px;top:171.00px;width:16.00px;height:15.50px;background:#2f2f2f;"></div>
<div class="b" style="left:2511.50px;top:186.50px;width:16.00px;height:215.80px;background:#303030;"></div>
<div class="b" style="left:2511.50px;top:1014.00px;width:16.00px;height:15.50px;background:#2f2f2f;"></div>
<svg style="left:2511.5px;top:171px" width="16" height="860" viewBox="0 0 16 860"><path d="M3.6 9.6 L8 5.2 L12.4 9.6 Z" fill="#0c0c0c"/><path d="M3.6 848.4 L8 852.8 L12.4 848.4 Z" fill="#0c0c0c"/><path d="M4 120.4H12M4 123.2H12M4 126H12M4 128.8H12" stroke="#a0a0a0" stroke-width="1"/></svg>
<div class="b" style="left:2510.50px;top:171.00px;width:1.00px;height:858.50px;background:#222;"></div>
<div class="b" style="left:364.00px;top:1029.50px;width:2163.50px;height:16.60px;background:#303030;"></div>
<div class="b" style="left:364.00px;top:1029.50px;width:275.00px;height:15.60px;background:#303030;box-shadow:0 0 0 1px #2a2a2a;"></div>
<div class="b" style="left:368.60px;top:1034.60px;width:16.40px;height:1.00px;background:#5c5c5c;"></div>
<div class="b" style="left:368.60px;top:1037.70px;width:16.40px;height:1.00px;background:#5c5c5c;"></div>
<div class="b" style="left:368.60px;top:1040.80px;width:16.40px;height:1.00px;background:#5c5c5c;"></div>
<div class="b" style="left:364.00px;top:1046.30px;width:2163.50px;height:21.30px;background:#2f2f2f;"></div>
<div class="b" style="left:364.00px;top:1046.00px;width:2163.50px;height:1.00px;background:#282828;"></div>
<div class="b" style="left:364.00px;top:1067.60px;width:2163.50px;height:265.60px;background:#262626;"></div>
<div class="b" style="left:364.00px;top:1068.20px;width:2163.50px;height:19.00px;background:#262626;"></div>
<div class="b" style="left:364.00px;top:1087.60px;width:2163.50px;height:1.00px;background:#222;"></div>
<div class="b" style="left:364.00px;top:1088.80px;width:2163.50px;height:18.60px;background:#3b3b3b;"></div>
<div class="b" style="left:364.00px;top:1107.60px;width:2163.50px;height:1.00px;background:#222;"></div>
<div class="b" style="left:364.00px;top:1127.20px;width:2163.50px;height:1.00px;background:#222;"></div>
<div class="b" style="left:564.30px;top:1046.30px;width:1.20px;height:287.00px;background:#1f1f1f;"></div>
<div class="b" style="left:650.20px;top:1046.30px;width:1.20px;height:287.00px;background:#1f1f1f;"></div>
<div class="b" style="left:909.40px;top:1046.30px;width:1.20px;height:287.00px;background:#1f1f1f;"></div>
<span class="t" style="left:423.15px;top:1049.96px;font-size:14.67px;color:#d4d4d4;transform:scaleX(0.8492);">Process Name</span>
<span class="t" style="left:577.40px;top:1049.96px;font-size:14.67px;color:#d4d4d4;transform:scaleX(0.8447);">Process ID</span>
<span class="t" style="left:761.20px;top:1049.96px;font-size:14.67px;color:#d4d4d4;transform:scaleX(0.7818);">% CPU</span>
<svg style="left:367.80px;top:1070.20px" width="15" height="16" viewBox="0 0 15 16"><rect x="5.2" y="0.6" width="8.6" height="13.6" fill="#d8dce4" stroke="#8e96a4" stroke-width="0.7"/><rect x="6.6" y="2" width="5.8" height="2.2" fill="#f4f6fa" stroke="#a0a8b6" stroke-width="0.4"/><rect x="6.6" y="5.4" width="5.8" height="2.2" fill="#f4f6fa" stroke="#a0a8b6" stroke-width="0.4"/><rect x="7.2" y="2.5" width="1.5" height="1.2" fill="#38b050"/><rect x="7.2" y="5.9" width="1.5" height="1.2" fill="#38b050"/><path d="M0.8 9.8 L6.4 12.6 L0.8 15.4 Z" fill="#2cb24c" stroke="#1a8a38" stroke-width="0.5"/></svg>
<span class="t" style="left:387.50px;top:1070.66px;font-size:14.67px;color:#e0e0e0;transform:scaleX(0.9896);">idle</span>
<span class="t" style="left:639.59px;top:1071.30px;font-size:13.60px;color:#e0e0e0;transform:scaleX(0.9000);">0</span>
<span class="t" style="left:762.65px;top:1071.30px;font-size:13.60px;color:#e0e0e0;transform:scaleX(0.9000);">0.00%</span>
<svg style="left:367.80px;top:1090.20px" width="15" height="16" viewBox="0 0 15 16"><rect x="5.2" y="0.6" width="8.6" height="13.6" fill="#d8dce4" stroke="#8e96a4" stroke-width="0.7"/><rect x="6.6" y="2" width="5.8" height="2.2" fill="#f4f6fa" stroke="#a0a8b6" stroke-width="0.4"/><rect x="6.6" y="5.4" width="5.8" height="2.2" fill="#f4f6fa" stroke="#a0a8b6" stroke-width="0.4"/><rect x="7.2" y="2.5" width="1.5" height="1.2" fill="#38b050"/><rect x="7.2" y="5.9" width="1.5" height="1.2" fill="#38b050"/><path d="M0.8 9.8 L6.4 12.6 L0.8 15.4 Z" fill="#2cb24c" stroke="#1a8a38" stroke-width="0.5"/></svg>
<span class="t" style="left:387.50px;top:1090.66px;font-size:14.67px;color:#e0e0e0;transform:scaleX(0.9210);">kernel</span>
<span class="t" style="left:639.59px;top:1091.30px;font-size:13.60px;color:#e0e0e0;transform:scaleX(0.9000);">0</span>
<span class="t" style="left:762.65px;top:1091.30px;font-size:13.60px;color:#e0e0e0;transform:scaleX(0.9000);">0.00%</span>
<svg style="left:367.80px;top:1110.20px" width="15" height="16" viewBox="0 0 15 16"><rect x="5.2" y="0.6" width="8.6" height="13.6" fill="#d8dce4" stroke="#8e96a4" stroke-width="0.7"/><rect x="6.6" y="2" width="5.8" height="2.2" fill="#f4f6fa" stroke="#a0a8b6" stroke-width="0.4"/><rect x="6.6" y="5.4" width="5.8" height="2.2" fill="#f4f6fa" stroke="#a0a8b6" stroke-width="0.4"/><rect x="7.2" y="2.5" width="1.5" height="1.2" fill="#38b050"/><rect x="7.2" y="5.9" width="1.5" height="1.2" fill="#38b050"/><path d="M0.8 9.8 L6.4 12.6 L0.8 15.4 Z" fill="#2cb24c" stroke="#1a8a38" stroke-width="0.5"/></svg>
<span class="t" style="left:387.50px;top:1110.66px;font-size:14.67px;color:#e0e0e0;transform:scaleX(0.8937);">com.example.blankmsaafixed</span>
<span class="t" style="left:619.17px;top:1111.30px;font-size:13.60px;color:#e0e0e0;transform:scaleX(0.9000);">7859</span>
<span class="t" style="left:762.65px;top:1111.30px;font-size:13.60px;color:#e0e0e0;transform:scaleX(0.9000);">4.51%</span>
<div class="b" style="left:652.20px;top:1109.50px;width:10.80px;height:16.60px;background:#f8f400;"></div>
<div class="b" style="left:364.00px;top:1333.20px;width:2163.50px;height:23.60px;background:#303030;"></div>
<div class="b" style="left:368.90px;top:1338.80px;width:12.20px;height:12.20px;background:linear-gradient(135deg,#fdfdfd,#c8c8c8);box-shadow:inset 0 0 0 1px #f4f4f4, inset 0 0 0 2px #9a9a9a;"></div>
<span class="t" style="left:384.00px;top:1337.26px;font-size:14.67px;color:#dcdcdc;transform:scaleX(0.9164);">Download process images from target</span>
</div>
</body></html>
